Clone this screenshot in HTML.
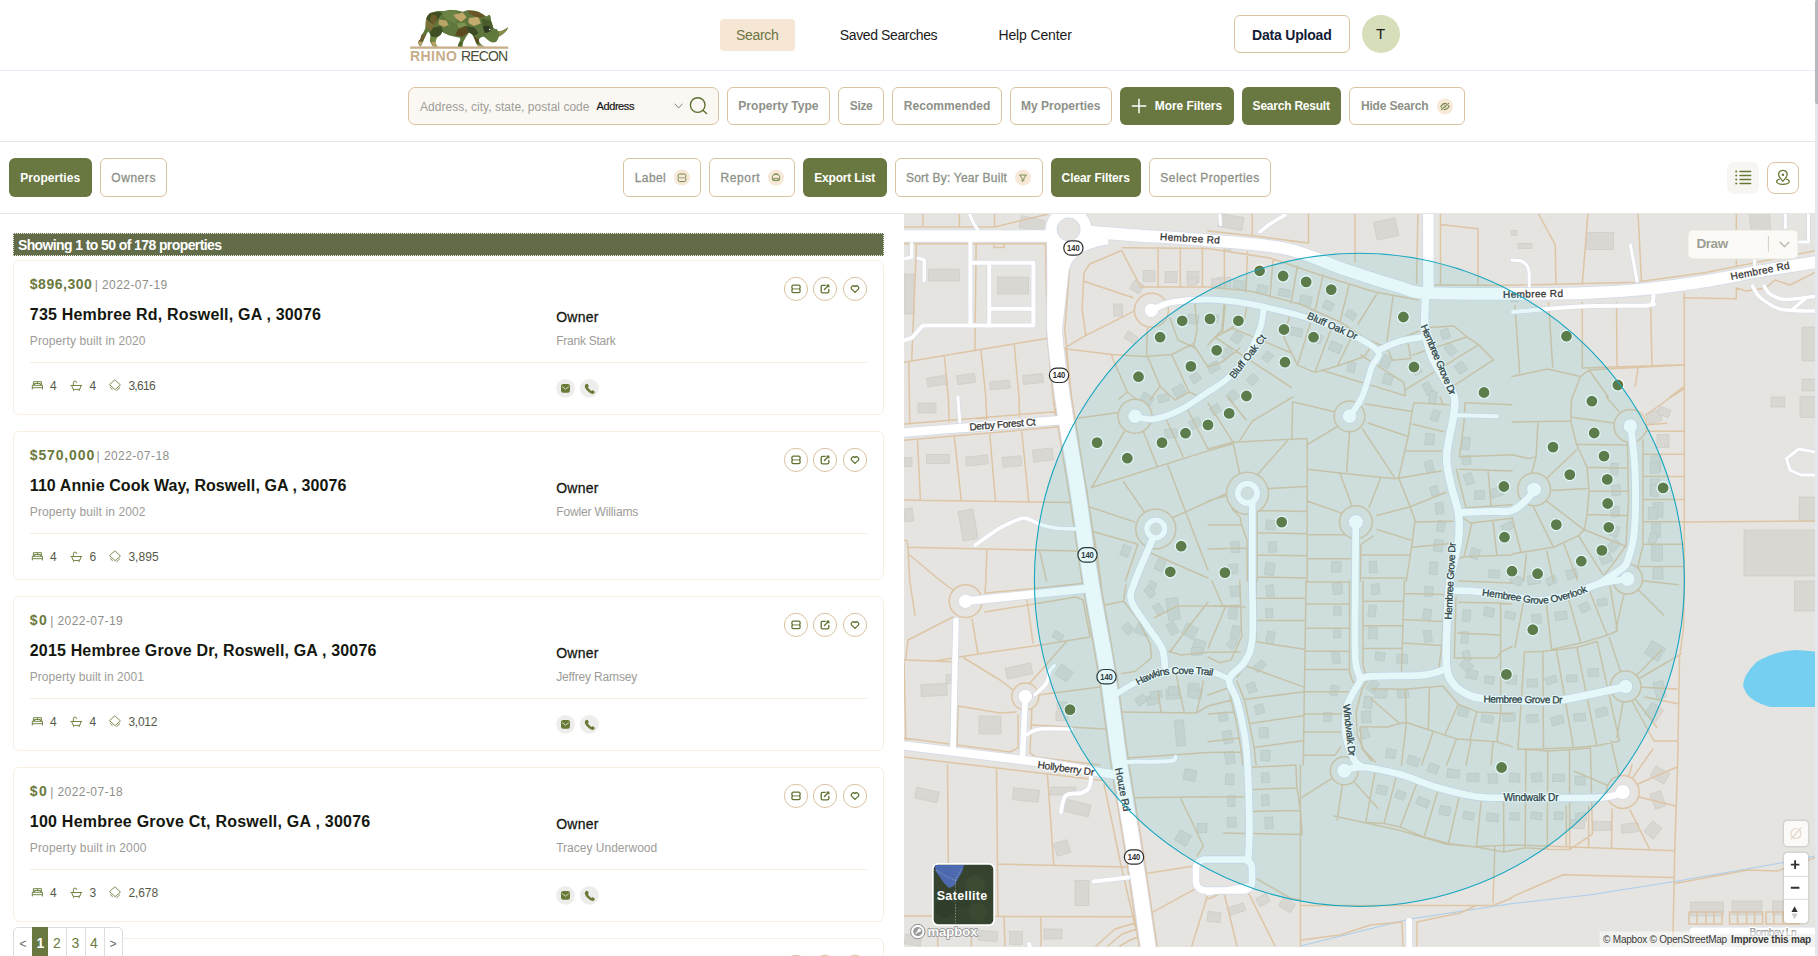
<!DOCTYPE html>
<html><head><meta charset="utf-8"><title>Rhino Recon</title>
<style>
html,body{margin:0;padding:0;background:#fff;}
body{width:1818px;height:956px;overflow:hidden;position:relative;font-family:"Liberation Sans",sans-serif;}
.abs{position:absolute;}
.t{position:absolute;white-space:pre;line-height:1;font-family:"Liberation Sans",sans-serif;}
svg{position:absolute;overflow:visible;}
</style></head>
<body>
<div class="abs" style="left:0;top:70px;width:1815px;height:1px;background:#ececf8"></div>
<svg style="left:400px;top:0px" width="120" height="75" viewBox="0 0 1530 956"><defs><clipPath id="rh"><path d="M400,160 L480,140 L560,140 L640,125 L720,130 L800,150 L860,130 L940,135 L1000,150 L1060,180 L1100,210 L1125,195 L1142,188 L1156,215 L1160,260 L1175,300 L1188,352 L1212,372 L1232,368 L1240,385 L1262,402 L1310,390 L1350,365 L1380,343 L1366,382 L1330,422 L1290,452 L1262,466 L1246,500 L1226,536 L1180,542 L1140,526 L1100,492 L1070,470 L1040,472 L1005,500 L1012,540 L1042,575 L1078,592 L1060,600 L1000,597 L975,560 L950,500 L920,440 L880,415 L835,480 L805,540 L792,575 L803,597 L735,597 L746,560 L770,500 L762,480 L700,470 L620,450 L560,420 L540,400 L520,440 L470,480 L452,530 L462,570 L484,592 L420,592 L400,560 L380,520 L390,470 L380,430 L362,400 L340,430 L310,490 L290,540 L272,580 L256,597 L236,562 L230,530 L260,500 L272,450 L300,410 L322,360 L326,300 L332,240 L352,200 L380,170 Z"/></clipPath></defs><g clip-path="url(#rh)"><path d="M300,100 H1400 V620 H200 V100Z" fill="#5f773c"/><path d="M330,180 L470,150 L540,170 L470,260 L400,300 L340,240Z" fill="#3f4d22"/><path d="M400,180 L470,200 L470,260 L420,330 L380,250Z" fill="#6b5c2c"/><path d="M326,240 L400,300 L440,330 L400,400 L330,330Z" fill="#7d7039"/><path d="M420,350 L520,330 L560,420 L500,470 L400,470 L380,420Z" fill="#3e4f24"/><path d="M500,250 L590,260 L620,320 L560,345 L490,310Z" fill="#b9a566"/><path d="M560,140 L700,130 L760,200 L700,300 L600,250 L540,180Z" fill="#6b8445"/><path d="M680,190 L800,160 L850,220 L780,280 L720,240Z" fill="#bfa86a"/><path d="M880,230 L1000,215 L1030,300 L940,330 L870,290Z" fill="#c2ac6f"/><path d="M860,130 L1000,150 L1090,210 L1020,230 L930,200 L880,170Z" fill="#6a5526"/><path d="M720,300 L830,290 L860,340 L760,370Z" fill="#7c9350"/><path d="M740,370 L830,330 L880,415 L790,470 L700,450Z" fill="#5c4a20"/><path d="M830,330 L950,350 L1000,420 L950,460 L880,415Z" fill="#3c4a26"/><path d="M1040,240 L1160,260 L1190,360 L1120,420 L1060,380Z" fill="#4a5c2a"/><path d="M1060,330 L1140,330 L1150,400 L1080,420Z" fill="#2f3a22"/><path d="M1120,420 L1262,402 L1246,500 L1180,542 L1100,492Z" fill="#5f7a3a"/><path d="M1262,402 L1380,343 L1330,422 L1262,466Z" fill="#8a8a4a"/><path d="M260,450 L340,430 L310,520 L240,560 L225,520Z" fill="#6d5f2e"/><path d="M225,520 L290,540 L256,600 L230,570Z" fill="#b5a468"/><path d="M380,470 L470,480 L452,540 L400,540Z" fill="#71893f"/><path d="M400,540 L452,530 L484,594 L420,594Z" fill="#b3a062"/><path d="M940,460 L1005,500 L1012,540 L975,560Z" fill="#5a4a20"/><path d="M1000,570 L1078,590 L1060,602 L1000,600Z" fill="#c1ad74"/><path d="M746,540 L805,540 L803,600 L735,600Z" fill="#4d6128"/></g><circle cx="1143" cy="376" r="9" fill="#fff"/><rect x="130" y="592" width="1250" height="30" fill="#c9b08d"/></svg>
<span class="t" style="left:410.00px;top:49.00px;font-size:14px;font-weight:700;color:#c7ae8a;letter-spacing:0.444px;">RHINO</span>
<span class="t" style="left:461.00px;top:49.00px;font-size:14px;font-weight:400;color:#4a4f36;letter-spacing:-0.841px;">RECON</span>
<div class="abs" style="left:720px;top:19px;width:75px;height:32px;background:#f6e7d5;border-radius:4px"></div>
<span class="t" style="left:735.90px;top:28.00px;font-size:14px;font-weight:400;color:#6c7344;letter-spacing:-0.292px;">Search</span>
<span class="t" style="left:839.80px;top:28.00px;font-size:14px;font-weight:400;color:#1b1b1b;letter-spacing:-0.380px;">Saved Searches</span>
<span class="t" style="left:998.50px;top:28.00px;font-size:14px;font-weight:400;color:#1b1b1b;letter-spacing:-0.140px;">Help Center</span>
<div class="abs" style="left:1234px;top:15px;width:116px;height:38px;border:1px solid #dbc2a1;border-radius:6px;box-sizing:border-box"></div>
<span class="t" style="left:1252.10px;top:28.00px;font-size:14px;font-weight:700;color:#141c36;letter-spacing:-0.209px;">Data Upload</span>
<div class="abs" style="left:1362px;top:15px;width:38px;height:38px;border-radius:50%;background:#d6dfba"></div>
<span class="t" style="left:1375.90px;top:26.00px;font-size:15px;font-weight:400;color:#1b1b1b;letter-spacing:0.000px;">T</span>
<div class="abs" style="left:0;top:141px;width:1815px;height:1px;background:#e6e6e2"></div>
<div class="abs" style="left:408px;top:87px;width:311px;height:38px;border:1px solid #dbc2a1;border-radius:7px;box-sizing:border-box;background:#fbf8f3"></div>
<span class="t" style="left:420.10px;top:101.00px;font-size:12px;font-weight:400;color:#9d9d98;letter-spacing:0.027px;">Address, city, state, postal code</span>
<span class="t" style="left:596.60px;top:101.00px;font-size:11px;font-weight:400;color:#151515;letter-spacing:-0.427px;-webkit-text-stroke:0.2px #151515;">Address</span>
<svg style="left:673.5px;top:103.3px" width="9.2" height="6" viewBox="0 0 9.2 6"><path d="M1,1 L4.6,5 L8.2,1" fill="none" stroke="#85857f" stroke-width="1" stroke-linecap="round" stroke-linejoin="round"/></svg>
<svg style="left:686px;top:94px" width="24" height="24" viewBox="0 0 24 24"><circle cx="11.7" cy="11" r="7.3" fill="none" stroke="#5b6f2c" stroke-width="1.35"/><path d="M17.2,16.4 L20.6,19.5" stroke="#5b6f2c" stroke-width="1.35" stroke-linecap="round"/></svg>
<div class="abs" style="left:727px;top:87px;width:103px;height:38px;border:1px solid #dbc2a1;border-radius:6px;box-sizing:border-box;background:#fff"></div>
<span class="t" style="left:738.30px;top:100.00px;font-size:12px;font-weight:700;color:#8e9188;letter-spacing:0.032px;">Property Type</span>
<div class="abs" style="left:838px;top:87px;width:46px;height:38px;border:1px solid #dbc2a1;border-radius:6px;box-sizing:border-box;background:#fff"></div>
<span class="t" style="left:849.80px;top:100.00px;font-size:12px;font-weight:700;color:#8e9188;letter-spacing:-0.372px;">Size</span>
<div class="abs" style="left:892px;top:87px;width:110px;height:38px;border:1px solid #dbc2a1;border-radius:6px;box-sizing:border-box;background:#fff"></div>
<span class="t" style="left:903.80px;top:100.00px;font-size:12px;font-weight:700;color:#8e9188;letter-spacing:0.057px;">Recommended</span>
<div class="abs" style="left:1010px;top:87px;width:102px;height:38px;border:1px solid #dbc2a1;border-radius:6px;box-sizing:border-box;background:#fff"></div>
<span class="t" style="left:1021.00px;top:100.00px;font-size:12px;font-weight:700;color:#8e9188;letter-spacing:0.003px;">My Properties</span>
<div class="abs" style="left:1120px;top:87px;width:114px;height:38px;border-radius:6px;background:#697840"></div>
<svg style="left:1131.1px;top:97.7px" width="16" height="16" viewBox="0 0 16 16"><path d="M8,1.3 V14.7 M1.3,8 H14.7" stroke="#fff" stroke-width="1.5" stroke-linecap="round"/></svg>
<span class="t" style="left:1154.80px;top:100.00px;font-size:12px;font-weight:700;color:#fff;letter-spacing:-0.065px;">More Filters</span>
<div class="abs" style="left:1242px;top:87px;width:99px;height:38px;border-radius:6px;background:#697840"></div>
<span class="t" style="left:1252.60px;top:100.00px;font-size:12px;font-weight:700;color:#fff;letter-spacing:-0.221px;">Search Result</span>
<div class="abs" style="left:1349px;top:87px;width:116px;height:38px;border:1px solid #dbc2a1;border-radius:6px;box-sizing:border-box;background:#fff"></div>
<span class="t" style="left:1360.90px;top:100.00px;font-size:12px;font-weight:700;color:#8e9188;letter-spacing:-0.158px;">Hide Search</span>
<svg style="left:0;top:0" width="1818" height="956"><circle cx="1445" cy="106.5" r="8" fill="#f7e8d7"/><path d="M1440.8,106.5 q4.2,-6.2 8.4,0 q-4.2,6.2 -8.4,0Z" fill="none" stroke="#6f8447" stroke-width="1.1"/><circle cx="1445" cy="106.5" r="1.3" fill="none" stroke="#6f8447" stroke-width="0.9"/><path d="M1441.4,109.6 L1448.6,103.4" stroke="#f7e8d7" stroke-width="2.4"/><path d="M1441.4,109.6 L1448.6,103.4" stroke="#6f8447" stroke-width="1.05" stroke-linecap="round"/></svg>
<div class="abs" style="left:0;top:213px;width:1815px;height:1px;background:#e6e6e2"></div>
<div class="abs" style="left:9px;top:158px;width:83px;height:39px;border-radius:6px;background:#697840"></div>
<span class="t" style="left:20.20px;top:172.00px;font-size:12px;font-weight:700;color:#fff;letter-spacing:0.071px;">Properties</span>
<div class="abs" style="left:100px;top:158px;width:67px;height:39px;border:1px solid #dbc2a1;border-radius:6px;box-sizing:border-box;background:#fff"></div>
<span class="t" style="left:111.30px;top:172.00px;font-size:12px;font-weight:400;color:#8e9188;letter-spacing:0.551px;-webkit-text-stroke:0.3px #8e9188;">Owners</span>
<div class="abs" style="left:623px;top:158px;width:78px;height:39px;border:1px solid #dbc2a1;border-radius:6px;box-sizing:border-box;background:#fff"></div>
<span class="t" style="left:634.80px;top:172.00px;font-size:12px;font-weight:400;color:#8e9188;letter-spacing:0.381px;-webkit-text-stroke:0.3px #8e9188;">Label</span>
<svg style="left:0;top:0" width="1818" height="956"><circle cx="682" cy="177.6" r="8" fill="#f7e8d7"/><path d="M679.6,173.99999999999997 H684.4 Q685.8,173.99999999999997 685.8,175.39999999999998 V176.89999999999998 Q684.63,177.79999999999998 685.8,178.7 V180.2 Q685.8,181.6 684.4,181.6 H679.6 Q678.2,181.6 678.2,180.2 V178.7 Q679.37,177.79999999999998 678.2,176.89999999999998 V175.39999999999998 Q678.2,173.99999999999997 679.6,173.99999999999997Z" fill="none" stroke="#6f8447" stroke-width="0.95" stroke-linejoin="round"/><path d="M679.4000000000001,177.79999999999998 H684.5999999999999" stroke="#6f8447" stroke-width="0.8075" opacity="0.8"/></svg>
<div class="abs" style="left:709px;top:158px;width:86px;height:39px;border:1px solid #dbc2a1;border-radius:6px;box-sizing:border-box;background:#fff"></div>
<span class="t" style="left:720.50px;top:172.00px;font-size:12px;font-weight:400;color:#8e9188;letter-spacing:0.614px;-webkit-text-stroke:0.3px #8e9188;">Report</span>
<svg style="left:0;top:0" width="1818" height="956"><circle cx="776" cy="177.6" r="8" fill="#f7e8d7"/><path d="M772.4,176.79999999999998 q0,-2.6 3.6,-2.6 q3.6,0 3.6,2.6 v2.2 q0,1.6 -1.6,1.6 h-4 q-1.6,0 -1.6,-1.6Z" fill="none" stroke="#6f8447" stroke-width="0.95"/><path d="M773.8,180.6 v-2 h4.4 v2" fill="none" stroke="#6f8447" stroke-width="0.95"/><path d="M774,174.0 h4" stroke="#6f8447" stroke-width="0.9"/></svg>
<div class="abs" style="left:803px;top:158px;width:84px;height:39px;border-radius:6px;background:#697840"></div>
<span class="t" style="left:814.20px;top:172.00px;font-size:12px;font-weight:700;color:#fff;letter-spacing:-0.167px;">Export List</span>
<div class="abs" style="left:895px;top:158px;width:148px;height:39px;border:1px solid #dbc2a1;border-radius:6px;box-sizing:border-box;background:#fff"></div>
<span class="t" style="left:905.90px;top:172.00px;font-size:12px;font-weight:400;color:#8e9188;letter-spacing:0.237px;-webkit-text-stroke:0.3px #8e9188;">Sort By: Year Built</span>
<svg style="left:0;top:0" width="1818" height="956"><circle cx="1023" cy="177.6" r="8" fill="#f7e8d7"/><path d="M1019.6,175.0 h6.8 l-2.5,3.2 v2.3 l-1.8,0.9 v-3.2Z" fill="none" stroke="#6f8447" stroke-width="0.95" stroke-linejoin="round"/></svg>
<div class="abs" style="left:1051px;top:158px;width:90px;height:39px;border-radius:6px;background:#697840"></div>
<span class="t" style="left:1061.60px;top:172.00px;font-size:12px;font-weight:700;color:#fff;letter-spacing:-0.090px;">Clear Filters</span>
<div class="abs" style="left:1149px;top:158px;width:122px;height:39px;border:1px solid #dbc2a1;border-radius:6px;box-sizing:border-box;background:#fff"></div>
<span class="t" style="left:1160.30px;top:172.00px;font-size:12px;font-weight:400;color:#8e9188;letter-spacing:0.469px;-webkit-text-stroke:0.3px #8e9188;">Select Properties</span>
<div class="abs" style="left:1727px;top:162px;width:32px;height:32px;border-radius:7px;background:#f7f6f2"></div>
<svg style="left:0;top:0" width="1818" height="956"><path d="M1740,171.4 H1750.6" stroke="#647a35" stroke-width="1.5" stroke-linecap="round"/><circle cx="1736.2" cy="171.4" r="1" fill="#647a35"/><path d="M1740,175.4 H1750.6" stroke="#647a35" stroke-width="1.5" stroke-linecap="round"/><circle cx="1736.2" cy="175.4" r="1" fill="#647a35"/><path d="M1740,179.4 H1750.6" stroke="#647a35" stroke-width="1.5" stroke-linecap="round"/><circle cx="1736.2" cy="179.4" r="1" fill="#647a35"/><path d="M1740,183.4 H1750.6" stroke="#647a35" stroke-width="1.5" stroke-linecap="round"/><circle cx="1736.2" cy="183.4" r="1" fill="#647a35"/></svg>
<div class="abs" style="left:1767px;top:162px;width:32px;height:32px;border:1px solid #dbc2a1;border-radius:8px;box-sizing:border-box"></div>
<svg style="left:0;top:0" width="1818" height="956"><path d="M1782.9,181.2 C1780.7,178.6 1778.6000000000001,177 1778.6000000000001,174.6 A4.3,4.3 0 1 1 1787.2,174.6 C1787.2,177 1785.1000000000001,178.6 1782.9,181.2Z" fill="none" stroke="#647a35" stroke-width="1.3" stroke-linejoin="round"/><circle cx="1782.9" cy="174.8" r="1.3" fill="#647a35"/><path d="M1779.3000000000002,179.2 C1774.7,180.6 1775.9,184.3 1782.9,184.3 C1789.9,184.3 1791.1000000000001,180.6 1786.5,179.2" fill="none" stroke="#647a35" stroke-width="1.3" stroke-linecap="round"/></svg>
<div class="abs" style="left:13px;top:233px;width:871px;height:23px;background:#636c49;border:1px dotted #e9ece0;box-sizing:border-box"></div>
<span class="t" style="left:17.90px;top:238.00px;font-size:14px;font-weight:700;color:#fff;letter-spacing:-0.599px;">Showing 1 to 50 of 178 properties</span>
<div class="abs" style="left:13px;top:260px;width:871px;height:155px;border:1px solid #f9eee4;border-radius:6px;box-sizing:border-box;background:#fff"></div>
<svg style="left:0;top:0" width="1818" height="956"><circle cx="796" cy="288.9" r="11.6" fill="#fff" stroke="#dbc2a1" stroke-width="1"/><path d="M793.3,285.2 H798.7 Q800.1,285.2 800.1,286.59999999999997 V288.0 Q798.9300000000001,288.9 800.1,289.79999999999995 V291.2 Q800.1,292.59999999999997 798.7,292.59999999999997 H793.3 Q791.9,292.59999999999997 791.9,291.2 V289.79999999999995 Q793.0699999999999,288.9 791.9,288.0 V286.59999999999997 Q791.9,285.2 793.3,285.2Z" fill="none" stroke="#5f7330" stroke-width="1.3" stroke-linejoin="round"/><path d="M793.1,288.9 H798.9" stroke="#5f7330" stroke-width="1.105" opacity="0.8"/></svg>
<svg style="left:0;top:0" width="1818" height="956"><circle cx="825" cy="288.9" r="11.6" fill="#fff" stroke="#dbc2a1" stroke-width="1"/><path d="M825.2,285.29999999999995 H822.6 Q821.2,285.29999999999995 821.2,286.7 V291.5 Q821.2,292.9 822.6,292.9 H827.4 Q828.8,292.9 828.8,291.5 V289.5" fill="none" stroke="#5f7330" stroke-width="1.35" stroke-linecap="round"/><path d="M824.4,289.5 L828.4,285.5" stroke="#5f7330" stroke-width="1.35" stroke-linecap="round"/><path d="M826.6,284.9 H829 V287.29999999999995Z" fill="#5f7330" stroke="#5f7330" stroke-width="0.8" stroke-linejoin="round"/></svg>
<svg style="left:0;top:0" width="1818" height="956"><circle cx="855" cy="288.9" r="11.6" fill="#fff" stroke="#dbc2a1" stroke-width="1"/><path d="M855,292.4 L851.4,288.9 A2.2,2.2 0 0 1 855,286.5 A2.2,2.2 0 0 1 858.6,288.9 Z" fill="none" stroke="#5f7330" stroke-width="1.3" stroke-linejoin="round"/></svg>
<span class="t" style="left:29.80px;top:277.00px;font-size:14px;font-weight:700;color:#6b7a3e;letter-spacing:0.513px;">$896,300</span>
<span class="t" style="left:94.70px;top:279.00px;font-size:12px;font-weight:400;color:#8f8f8a;letter-spacing:0.432px;">| 2022-07-19</span>
<span class="t" style="left:29.80px;top:307.00px;font-size:16px;font-weight:700;color:#14170e;letter-spacing:0.183px;">735 Hembree Rd, Roswell, GA , 30076</span>
<span class="t" style="left:29.80px;top:335.00px;font-size:12px;font-weight:400;color:#9c9c97;letter-spacing:0.104px;">Property built in 2020</span>
<div class="abs" style="left:30px;top:362px;width:837px;height:1px;background:#f8ece1"></div>
<svg style="left:0;top:0" width="1818" height="956"><path d="M32.3,389.4 V385.3 H42.5 V389.4 M32.3,387.7 H42.5 M33.4,385.3 V381.7 H41.4 V385.3 M37.4,381.7 V383.3 M34.4,385.09999999999997 V383.5 H40.4 V385.09999999999997" fill="none" stroke="#6d7f3d" stroke-width="0.95" stroke-linejoin="round"/></svg>
<span class="t" style="left:50.10px;top:380.00px;font-size:12px;font-weight:400;color:#55594a;letter-spacing:0.000px;">4</span>
<svg style="left:0;top:0" width="1818" height="956"><path d="M71,385.5 H81.8 M72.1,385.5 V386.9 Q72.1,389.5 74.7,389.5 H78.1 Q80.7,389.5 80.7,386.9 V385.5 M73.6,389.5 V390.7 M79.2,389.5 V390.7 M73.4,385.5 V382.7 Q73.4,381.09999999999997 75,381.09999999999997 Q76.5,381.09999999999997 76.5,382.5" fill="none" stroke="#6d7f3d" stroke-width="0.95" stroke-linecap="round"/></svg>
<span class="t" style="left:89.50px;top:380.00px;font-size:12px;font-weight:400;color:#55594a;letter-spacing:0.000px;">4</span>
<svg style="left:0;top:0" width="1818" height="956"><path d="M115.1,380.09999999999997 L120.4,384.9 L115.1,389.7 L109.8,384.9Z M110.4,387.7 L112.3,389.5 M119.8,387.7 L116.7,390.59999999999997" fill="none" stroke="#6d7f3d" stroke-width="0.9" stroke-linejoin="round" stroke-linecap="round"/></svg>
<span class="t" style="left:128.40px;top:380.00px;font-size:12px;font-weight:400;color:#55594a;letter-spacing:-0.708px;">3,616</span>
<span class="t" style="left:556.20px;top:310.00px;font-size:14px;font-weight:400;color:#14170e;letter-spacing:0.266px;-webkit-text-stroke:0.28px #14170e;">Owner</span>
<span class="t" style="left:556.20px;top:335.00px;font-size:12px;font-weight:400;color:#9c9c97;letter-spacing:-0.242px;">Frank Stark</span>
<svg style="left:0;top:0" width="1818" height="956"><circle cx="565.5" cy="388.3" r="9.4" fill="#ededeb"/><rect x="561.0" y="384.1" width="9" height="8.6" rx="2.2" fill="#6a7b37"/><path d="M562.5,386.90000000000003 L565.5,389.1 L568.5,386.90000000000003" fill="none" stroke="#eef0e4" stroke-width="0.8" stroke-linecap="round" stroke-linejoin="round"/></svg>
<svg style="left:0;top:0" width="1818" height="956"><circle cx="589.4" cy="388.3" r="9.4" fill="#ededeb"/><path d="M585.3,384.7 q1.2,-1.6 2.4,-0.6 l1,1.6 q0.3,0.8 -0.8,1.6 q1.2,2.4 3.4,3.6 q0.9,-1 1.7,-0.6 l1.6,1.1 q0.7,0.9 -0.6,2 q-1.6,1.2 -4.4,-0.6 q-3.2,-2.2 -4.6,-5.4 q-0.6,-1.6 0.3,-2.7Z" fill="#6a7b37"/></svg>
<div class="abs" style="left:13px;top:431px;width:871px;height:149px;border:1px solid #f9eee4;border-radius:6px;box-sizing:border-box;background:#fff"></div>
<svg style="left:0;top:0" width="1818" height="956"><circle cx="796" cy="459.9" r="11.6" fill="#fff" stroke="#dbc2a1" stroke-width="1"/><path d="M793.3,456.2 H798.7 Q800.1,456.2 800.1,457.59999999999997 V459.0 Q798.9300000000001,459.9 800.1,460.79999999999995 V462.2 Q800.1,463.59999999999997 798.7,463.59999999999997 H793.3 Q791.9,463.59999999999997 791.9,462.2 V460.79999999999995 Q793.0699999999999,459.9 791.9,459.0 V457.59999999999997 Q791.9,456.2 793.3,456.2Z" fill="none" stroke="#5f7330" stroke-width="1.3" stroke-linejoin="round"/><path d="M793.1,459.9 H798.9" stroke="#5f7330" stroke-width="1.105" opacity="0.8"/></svg>
<svg style="left:0;top:0" width="1818" height="956"><circle cx="825" cy="459.9" r="11.6" fill="#fff" stroke="#dbc2a1" stroke-width="1"/><path d="M825.2,456.29999999999995 H822.6 Q821.2,456.29999999999995 821.2,457.7 V462.5 Q821.2,463.9 822.6,463.9 H827.4 Q828.8,463.9 828.8,462.5 V460.5" fill="none" stroke="#5f7330" stroke-width="1.35" stroke-linecap="round"/><path d="M824.4,460.5 L828.4,456.5" stroke="#5f7330" stroke-width="1.35" stroke-linecap="round"/><path d="M826.6,455.9 H829 V458.29999999999995Z" fill="#5f7330" stroke="#5f7330" stroke-width="0.8" stroke-linejoin="round"/></svg>
<svg style="left:0;top:0" width="1818" height="956"><circle cx="855" cy="459.9" r="11.6" fill="#fff" stroke="#dbc2a1" stroke-width="1"/><path d="M855,463.4 L851.4,459.9 A2.2,2.2 0 0 1 855,457.5 A2.2,2.2 0 0 1 858.6,459.9 Z" fill="none" stroke="#5f7330" stroke-width="1.3" stroke-linejoin="round"/></svg>
<span class="t" style="left:29.80px;top:448.00px;font-size:14px;font-weight:700;color:#6b7a3e;letter-spacing:0.856px;">$570,000</span>
<span class="t" style="left:96.60px;top:450.00px;font-size:12px;font-weight:400;color:#8f8f8a;letter-spacing:0.432px;">| 2022-07-18</span>
<span class="t" style="left:29.80px;top:478.00px;font-size:16px;font-weight:700;color:#14170e;letter-spacing:0.079px;">110 Annie Cook Way, Roswell, GA , 30076</span>
<span class="t" style="left:29.80px;top:506.00px;font-size:12px;font-weight:400;color:#9c9c97;letter-spacing:0.104px;">Property built in 2002</span>
<div class="abs" style="left:30px;top:533px;width:837px;height:1px;background:#f8ece1"></div>
<svg style="left:0;top:0" width="1818" height="956"><path d="M32.3,560.4000000000001 V556.3000000000001 H42.5 V560.4000000000001 M32.3,558.7 H42.5 M33.4,556.3000000000001 V552.7 H41.4 V556.3000000000001 M37.4,552.7 V554.3000000000001 M34.4,556.1 V554.5 H40.4 V556.1" fill="none" stroke="#6d7f3d" stroke-width="0.95" stroke-linejoin="round"/></svg>
<span class="t" style="left:50.10px;top:551.00px;font-size:12px;font-weight:400;color:#55594a;letter-spacing:0.000px;">4</span>
<svg style="left:0;top:0" width="1818" height="956"><path d="M71,556.5 H81.8 M72.1,556.5 V557.9000000000001 Q72.1,560.5 74.7,560.5 H78.1 Q80.7,560.5 80.7,557.9000000000001 V556.5 M73.6,560.5 V561.7 M79.2,560.5 V561.7 M73.4,556.5 V553.7 Q73.4,552.1 75,552.1 Q76.5,552.1 76.5,553.5" fill="none" stroke="#6d7f3d" stroke-width="0.95" stroke-linecap="round"/></svg>
<span class="t" style="left:89.50px;top:551.00px;font-size:12px;font-weight:400;color:#55594a;letter-spacing:0.000px;">6</span>
<svg style="left:0;top:0" width="1818" height="956"><path d="M115.1,551.1 L120.4,555.9000000000001 L115.1,560.7 L109.8,555.9000000000001Z M110.4,558.7 L112.3,560.5 M119.8,558.7 L116.7,561.6" fill="none" stroke="#6d7f3d" stroke-width="0.9" stroke-linejoin="round" stroke-linecap="round"/></svg>
<span class="t" style="left:128.40px;top:551.00px;font-size:12px;font-weight:400;color:#55594a;letter-spacing:0.042px;">3,895</span>
<span class="t" style="left:556.20px;top:481.00px;font-size:14px;font-weight:400;color:#14170e;letter-spacing:0.266px;-webkit-text-stroke:0.28px #14170e;">Owner</span>
<span class="t" style="left:556.20px;top:506.00px;font-size:12px;font-weight:400;color:#9c9c97;letter-spacing:-0.136px;">Fowler Williams</span>
<div class="abs" style="left:13px;top:596px;width:871px;height:155px;border:1px solid #f9eee4;border-radius:6px;box-sizing:border-box;background:#fff"></div>
<svg style="left:0;top:0" width="1818" height="956"><circle cx="796" cy="624.9" r="11.6" fill="#fff" stroke="#dbc2a1" stroke-width="1"/><path d="M793.3,621.1999999999999 H798.7 Q800.1,621.1999999999999 800.1,622.5999999999999 V624.0 Q798.9300000000001,624.9 800.1,625.8 V627.2 Q800.1,628.6 798.7,628.6 H793.3 Q791.9,628.6 791.9,627.2 V625.8 Q793.0699999999999,624.9 791.9,624.0 V622.5999999999999 Q791.9,621.1999999999999 793.3,621.1999999999999Z" fill="none" stroke="#5f7330" stroke-width="1.3" stroke-linejoin="round"/><path d="M793.1,624.9 H798.9" stroke="#5f7330" stroke-width="1.105" opacity="0.8"/></svg>
<svg style="left:0;top:0" width="1818" height="956"><circle cx="825" cy="624.9" r="11.6" fill="#fff" stroke="#dbc2a1" stroke-width="1"/><path d="M825.2,621.3 H822.6 Q821.2,621.3 821.2,622.6999999999999 V627.5 Q821.2,628.9 822.6,628.9 H827.4 Q828.8,628.9 828.8,627.5 V625.5" fill="none" stroke="#5f7330" stroke-width="1.35" stroke-linecap="round"/><path d="M824.4,625.5 L828.4,621.5" stroke="#5f7330" stroke-width="1.35" stroke-linecap="round"/><path d="M826.6,620.9 H829 V623.3Z" fill="#5f7330" stroke="#5f7330" stroke-width="0.8" stroke-linejoin="round"/></svg>
<svg style="left:0;top:0" width="1818" height="956"><circle cx="855" cy="624.9" r="11.6" fill="#fff" stroke="#dbc2a1" stroke-width="1"/><path d="M855,628.4 L851.4,624.9 A2.2,2.2 0 0 1 855,622.5 A2.2,2.2 0 0 1 858.6,624.9 Z" fill="none" stroke="#5f7330" stroke-width="1.3" stroke-linejoin="round"/></svg>
<span class="t" style="left:29.80px;top:613.00px;font-size:14px;font-weight:700;color:#6b7a3e;letter-spacing:1.422px;">$0</span>
<span class="t" style="left:50.20px;top:615.00px;font-size:12px;font-weight:400;color:#8f8f8a;letter-spacing:0.432px;">| 2022-07-19</span>
<span class="t" style="left:29.80px;top:643.00px;font-size:16px;font-weight:700;color:#14170e;letter-spacing:0.160px;">2015 Hembree Grove Dr, Roswell, GA , 30076</span>
<span class="t" style="left:29.80px;top:671.00px;font-size:12px;font-weight:400;color:#9c9c97;letter-spacing:0.033px;">Property built in 2001</span>
<div class="abs" style="left:30px;top:698px;width:837px;height:1px;background:#f8ece1"></div>
<svg style="left:0;top:0" width="1818" height="956"><path d="M32.3,725.4000000000001 V721.3000000000001 H42.5 V725.4000000000001 M32.3,723.7 H42.5 M33.4,721.3000000000001 V717.7 H41.4 V721.3000000000001 M37.4,717.7 V719.3000000000001 M34.4,721.1 V719.5 H40.4 V721.1" fill="none" stroke="#6d7f3d" stroke-width="0.95" stroke-linejoin="round"/></svg>
<span class="t" style="left:50.10px;top:716.00px;font-size:12px;font-weight:400;color:#55594a;letter-spacing:0.000px;">4</span>
<svg style="left:0;top:0" width="1818" height="956"><path d="M71,721.5 H81.8 M72.1,721.5 V722.9000000000001 Q72.1,725.5 74.7,725.5 H78.1 Q80.7,725.5 80.7,722.9000000000001 V721.5 M73.6,725.5 V726.7 M79.2,725.5 V726.7 M73.4,721.5 V718.7 Q73.4,717.1 75,717.1 Q76.5,717.1 76.5,718.5" fill="none" stroke="#6d7f3d" stroke-width="0.95" stroke-linecap="round"/></svg>
<span class="t" style="left:89.50px;top:716.00px;font-size:12px;font-weight:400;color:#55594a;letter-spacing:0.000px;">4</span>
<svg style="left:0;top:0" width="1818" height="956"><path d="M115.1,716.1 L120.4,720.9000000000001 L115.1,725.7 L109.8,720.9000000000001Z M110.4,723.7 L112.3,725.5 M119.8,723.7 L116.7,726.6" fill="none" stroke="#6d7f3d" stroke-width="0.9" stroke-linejoin="round" stroke-linecap="round"/></svg>
<span class="t" style="left:128.40px;top:716.00px;font-size:12px;font-weight:400;color:#55594a;letter-spacing:-0.233px;">3,012</span>
<span class="t" style="left:556.20px;top:646.00px;font-size:14px;font-weight:400;color:#14170e;letter-spacing:0.266px;-webkit-text-stroke:0.28px #14170e;">Owner</span>
<span class="t" style="left:556.20px;top:671.00px;font-size:12px;font-weight:400;color:#9c9c97;letter-spacing:-0.157px;">Jeffrey Ramsey</span>
<svg style="left:0;top:0" width="1818" height="956"><circle cx="565.5" cy="724.3" r="9.4" fill="#ededeb"/><rect x="561.0" y="720.0999999999999" width="9" height="8.6" rx="2.2" fill="#6a7b37"/><path d="M562.5,722.9 L565.5,725.0999999999999 L568.5,722.9" fill="none" stroke="#eef0e4" stroke-width="0.8" stroke-linecap="round" stroke-linejoin="round"/></svg>
<svg style="left:0;top:0" width="1818" height="956"><circle cx="589.4" cy="724.3" r="9.4" fill="#ededeb"/><path d="M585.3,720.6999999999999 q1.2,-1.6 2.4,-0.6 l1,1.6 q0.3,0.8 -0.8,1.6 q1.2,2.4 3.4,3.6 q0.9,-1 1.7,-0.6 l1.6,1.1 q0.7,0.9 -0.6,2 q-1.6,1.2 -4.4,-0.6 q-3.2,-2.2 -4.6,-5.4 q-0.6,-1.6 0.3,-2.7Z" fill="#6a7b37"/></svg>
<div class="abs" style="left:13px;top:767px;width:871px;height:155px;border:1px solid #f9eee4;border-radius:6px;box-sizing:border-box;background:#fff"></div>
<svg style="left:0;top:0" width="1818" height="956"><circle cx="796" cy="795.9" r="11.6" fill="#fff" stroke="#dbc2a1" stroke-width="1"/><path d="M793.3,792.1999999999999 H798.7 Q800.1,792.1999999999999 800.1,793.5999999999999 V795.0 Q798.9300000000001,795.9 800.1,796.8 V798.2 Q800.1,799.6 798.7,799.6 H793.3 Q791.9,799.6 791.9,798.2 V796.8 Q793.0699999999999,795.9 791.9,795.0 V793.5999999999999 Q791.9,792.1999999999999 793.3,792.1999999999999Z" fill="none" stroke="#5f7330" stroke-width="1.3" stroke-linejoin="round"/><path d="M793.1,795.9 H798.9" stroke="#5f7330" stroke-width="1.105" opacity="0.8"/></svg>
<svg style="left:0;top:0" width="1818" height="956"><circle cx="825" cy="795.9" r="11.6" fill="#fff" stroke="#dbc2a1" stroke-width="1"/><path d="M825.2,792.3 H822.6 Q821.2,792.3 821.2,793.6999999999999 V798.5 Q821.2,799.9 822.6,799.9 H827.4 Q828.8,799.9 828.8,798.5 V796.5" fill="none" stroke="#5f7330" stroke-width="1.35" stroke-linecap="round"/><path d="M824.4,796.5 L828.4,792.5" stroke="#5f7330" stroke-width="1.35" stroke-linecap="round"/><path d="M826.6,791.9 H829 V794.3Z" fill="#5f7330" stroke="#5f7330" stroke-width="0.8" stroke-linejoin="round"/></svg>
<svg style="left:0;top:0" width="1818" height="956"><circle cx="855" cy="795.9" r="11.6" fill="#fff" stroke="#dbc2a1" stroke-width="1"/><path d="M855,799.4 L851.4,795.9 A2.2,2.2 0 0 1 855,793.5 A2.2,2.2 0 0 1 858.6,795.9 Z" fill="none" stroke="#5f7330" stroke-width="1.3" stroke-linejoin="round"/></svg>
<span class="t" style="left:29.80px;top:784.00px;font-size:14px;font-weight:700;color:#6b7a3e;letter-spacing:1.422px;">$0</span>
<span class="t" style="left:50.20px;top:786.00px;font-size:12px;font-weight:400;color:#8f8f8a;letter-spacing:0.432px;">| 2022-07-18</span>
<span class="t" style="left:29.80px;top:814.00px;font-size:16px;font-weight:700;color:#14170e;letter-spacing:0.232px;">100 Hembree Grove Ct, Roswell, GA , 30076</span>
<span class="t" style="left:29.80px;top:842.00px;font-size:12px;font-weight:400;color:#9c9c97;letter-spacing:0.152px;">Property built in 2000</span>
<div class="abs" style="left:30px;top:869px;width:837px;height:1px;background:#f8ece1"></div>
<svg style="left:0;top:0" width="1818" height="956"><path d="M32.3,896.4000000000001 V892.3000000000001 H42.5 V896.4000000000001 M32.3,894.7 H42.5 M33.4,892.3000000000001 V888.7 H41.4 V892.3000000000001 M37.4,888.7 V890.3000000000001 M34.4,892.1 V890.5 H40.4 V892.1" fill="none" stroke="#6d7f3d" stroke-width="0.95" stroke-linejoin="round"/></svg>
<span class="t" style="left:50.10px;top:887.00px;font-size:12px;font-weight:400;color:#55594a;letter-spacing:0.000px;">4</span>
<svg style="left:0;top:0" width="1818" height="956"><path d="M71,892.5 H81.8 M72.1,892.5 V893.9000000000001 Q72.1,896.5 74.7,896.5 H78.1 Q80.7,896.5 80.7,893.9000000000001 V892.5 M73.6,896.5 V897.7 M79.2,896.5 V897.7 M73.4,892.5 V889.7 Q73.4,888.1 75,888.1 Q76.5,888.1 76.5,889.5" fill="none" stroke="#6d7f3d" stroke-width="0.95" stroke-linecap="round"/></svg>
<span class="t" style="left:89.50px;top:887.00px;font-size:12px;font-weight:400;color:#55594a;letter-spacing:0.000px;">3</span>
<svg style="left:0;top:0" width="1818" height="956"><path d="M115.1,887.1 L120.4,891.9000000000001 L115.1,896.7 L109.8,891.9000000000001Z M110.4,894.7 L112.3,896.5 M119.8,894.7 L116.7,897.6" fill="none" stroke="#6d7f3d" stroke-width="0.9" stroke-linejoin="round" stroke-linecap="round"/></svg>
<span class="t" style="left:128.40px;top:887.00px;font-size:12px;font-weight:400;color:#55594a;letter-spacing:-0.083px;">2,678</span>
<span class="t" style="left:556.20px;top:817.00px;font-size:14px;font-weight:400;color:#14170e;letter-spacing:0.266px;-webkit-text-stroke:0.28px #14170e;">Owner</span>
<span class="t" style="left:556.20px;top:842.00px;font-size:12px;font-weight:400;color:#9c9c97;letter-spacing:0.004px;">Tracey Underwood</span>
<svg style="left:0;top:0" width="1818" height="956"><circle cx="565.5" cy="895.3" r="9.4" fill="#ededeb"/><rect x="561.0" y="891.0999999999999" width="9" height="8.6" rx="2.2" fill="#6a7b37"/><path d="M562.5,893.9 L565.5,896.0999999999999 L568.5,893.9" fill="none" stroke="#eef0e4" stroke-width="0.8" stroke-linecap="round" stroke-linejoin="round"/></svg>
<svg style="left:0;top:0" width="1818" height="956"><circle cx="589.4" cy="895.3" r="9.4" fill="#ededeb"/><path d="M585.3,891.6999999999999 q1.2,-1.6 2.4,-0.6 l1,1.6 q0.3,0.8 -0.8,1.6 q1.2,2.4 3.4,3.6 q0.9,-1 1.7,-0.6 l1.6,1.1 q0.7,0.9 -0.6,2 q-1.6,1.2 -4.4,-0.6 q-3.2,-2.2 -4.6,-5.4 q-0.6,-1.6 0.3,-2.7Z" fill="#6a7b37"/></svg>
<div class="abs" style="left:13px;top:938px;width:871px;height:60px;border:1px solid #f9eee4;border-radius:6px;box-sizing:border-box;background:#fff"></div>
<svg style="left:0;top:0" width="1818" height="956"><circle cx="796" cy="966.9" r="11.6" fill="#fff" stroke="#dbc2a1" stroke-width="1"/><path d="M793.3,963.1999999999999 H798.7 Q800.1,963.1999999999999 800.1,964.5999999999999 V966.0 Q798.9300000000001,966.9 800.1,967.8 V969.2 Q800.1,970.6 798.7,970.6 H793.3 Q791.9,970.6 791.9,969.2 V967.8 Q793.0699999999999,966.9 791.9,966.0 V964.5999999999999 Q791.9,963.1999999999999 793.3,963.1999999999999Z" fill="none" stroke="#5f7330" stroke-width="1.3" stroke-linejoin="round"/><path d="M793.1,966.9 H798.9" stroke="#5f7330" stroke-width="1.105" opacity="0.8"/></svg>
<svg style="left:0;top:0" width="1818" height="956"><circle cx="825" cy="966.9" r="11.6" fill="#fff" stroke="#dbc2a1" stroke-width="1"/><path d="M825.2,963.3 H822.6 Q821.2,963.3 821.2,964.6999999999999 V969.5 Q821.2,970.9 822.6,970.9 H827.4 Q828.8,970.9 828.8,969.5 V967.5" fill="none" stroke="#5f7330" stroke-width="1.35" stroke-linecap="round"/><path d="M824.4,967.5 L828.4,963.5" stroke="#5f7330" stroke-width="1.35" stroke-linecap="round"/><path d="M826.6,962.9 H829 V965.3Z" fill="#5f7330" stroke="#5f7330" stroke-width="0.8" stroke-linejoin="round"/></svg>
<svg style="left:0;top:0" width="1818" height="956"><circle cx="855" cy="966.9" r="11.6" fill="#fff" stroke="#dbc2a1" stroke-width="1"/><path d="M855,970.4 L851.4,966.9 A2.2,2.2 0 0 1 855,964.5 A2.2,2.2 0 0 1 858.6,966.9 Z" fill="none" stroke="#5f7330" stroke-width="1.3" stroke-linejoin="round"/></svg>
<div class="abs" style="left:13px;top:927px;width:110px;height:40px;border:1px solid #ddd;border-radius:5px;box-sizing:border-box;background:#fff"></div>
<div class="abs" style="left:32px;top:927px;width:16px;height:40px;background:#697840"></div>
<div class="abs" style="left:66.0px;top:928px;width:1px;height:30px;background:#ddd"></div>
<div class="abs" style="left:84.5px;top:928px;width:1px;height:30px;background:#ddd"></div>
<div class="abs" style="left:103.5px;top:928px;width:1px;height:30px;background:#ddd"></div>
<span class="t" style="left:19.40px;top:938.00px;font-size:12px;font-weight:400;color:#666;letter-spacing:0.000px;">&lt;</span>
<span class="t" style="left:36.40px;top:936.00px;font-size:14px;font-weight:700;color:#fff;letter-spacing:0.000px;">1</span>
<span class="t" style="left:52.90px;top:936.00px;font-size:14px;font-weight:400;color:#6b7a3e;letter-spacing:0.000px;">2</span>
<span class="t" style="left:71.50px;top:936.00px;font-size:14px;font-weight:400;color:#6b7a3e;letter-spacing:0.000px;">3</span>
<span class="t" style="left:90.00px;top:936.00px;font-size:14px;font-weight:400;color:#6b7a3e;letter-spacing:0.000px;">4</span>
<span class="t" style="left:109.40px;top:938.00px;font-size:12px;font-weight:400;color:#666;letter-spacing:0.000px;">&gt;</span>
<svg style="left:904px;top:214px;overflow:hidden" width="911" height="733" viewBox="904 214 911 733"><rect x="900" y="210" width="920" height="740" fill="#e5e4e0"/><g fill="#d9d7d2" stroke="#cbc9c3" stroke-width="0.6"><rect x="1147.0" y="695.5" width="12.0" height="9.0" transform="rotate(-12 1153.0 700.0)"/><rect x="1166.0" y="689.0" width="14.0" height="10.0" transform="rotate(-5 1173.0 694.0)"/><rect x="1188.0" y="688.0" width="14.0" height="10.0" transform="rotate(12 1195.0 693.0)"/><rect x="1175.5" y="720.0" width="9.0" height="26.0" transform="rotate(-5 1180.0 733.0)"/><rect x="1136.0" y="625.0" width="14.0" height="10.0" transform="rotate(20 1143.0 630.0)"/><rect x="1167.0" y="598.0" width="12.0" height="22.0" transform="rotate(-8 1173.0 609.0)"/><rect x="1183.5" y="625.0" width="13.0" height="12.0" transform="rotate(30 1190.0 631.0)"/><rect x="1193.0" y="640.0" width="12.0" height="12.0" transform="rotate(15 1199.0 646.0)"/><rect x="1184.0" y="769.5" width="12.0" height="11.0" transform="rotate(10 1190.0 775.0)"/><rect x="1176.5" y="832.0" width="13.0" height="12.0" transform="rotate(30 1183.0 838.0)"/><rect x="1197.0" y="823.5" width="10.0" height="9.0" transform="rotate(0 1202.0 828.0)"/><rect x="928.5" y="269.0" width="31.0" height="12.0" transform="rotate(0 944.0 275.0)"/><rect x="997.5" y="277.0" width="31.0" height="17.0" transform="rotate(0 1013.0 285.5)"/><rect x="904.0" y="274.0" width="10.0" height="40.0" transform="rotate(0 909.0 294.0)"/><rect x="927.0" y="376.5" width="20.0" height="9.0" transform="rotate(-8 937.0 381.0)"/><rect x="990.0" y="381.0" width="20.0" height="8.0" transform="rotate(-6 1000.0 385.0)"/><rect x="1023.0" y="374.5" width="20.0" height="9.0" transform="rotate(-6 1033.0 379.0)"/><rect x="957.0" y="374.5" width="18.0" height="9.0" transform="rotate(-8 966.0 379.0)"/><rect x="926.5" y="454.5" width="23.0" height="9.0" transform="rotate(0 938.0 459.0)"/><rect x="966.0" y="456.0" width="22.0" height="9.0" transform="rotate(-6 977.0 460.5)"/><rect x="1002.5" y="456.5" width="19.0" height="10.0" transform="rotate(-5 1012.0 461.5)"/><rect x="1033.0" y="449.0" width="20.0" height="12.0" transform="rotate(-6 1043.0 455.0)"/><rect x="904.0" y="457.5" width="8.0" height="9.0" transform="rotate(0 908.0 462.0)"/><rect x="904.0" y="508.5" width="9.0" height="13.0" transform="rotate(-8 908.5 515.0)"/><rect x="960.5" y="510.0" width="15.0" height="30.0" transform="rotate(-10 968.0 525.0)"/><rect x="918.0" y="403.0" width="18.0" height="10.0" transform="rotate(0 927.0 408.0)"/><rect x="1131.5" y="282.0" width="11.0" height="10.0" transform="rotate(30 1137.0 287.0)"/><rect x="1113.5" y="304.0" width="9.0" height="12.0" transform="rotate(0 1118.0 310.0)"/><rect x="1125.0" y="333.5" width="12.0" height="8.0" transform="rotate(35 1131.0 337.5)"/><rect x="1143.0" y="270.5" width="12.0" height="11.0" transform="rotate(0 1149.0 276.0)"/><rect x="1165.0" y="271.5" width="12.0" height="11.0" transform="rotate(0 1171.0 277.0)"/><rect x="1187.0" y="271.5" width="12.0" height="11.0" transform="rotate(0 1193.0 277.0)"/><rect x="921.0" y="684.0" width="26.0" height="12.0" transform="rotate(-3 934.0 690.0)"/><rect x="1006.0" y="665.5" width="26.0" height="11.0" transform="rotate(-12 1019.0 671.0)"/><rect x="979.0" y="716.0" width="22.0" height="18.0" transform="rotate(0 990.0 725.0)"/><rect x="1056.0" y="711.5" width="12.0" height="9.0" transform="rotate(0 1062.0 716.0)"/><rect x="1053.0" y="632.5" width="10.0" height="7.0" transform="rotate(30 1058.0 636.0)"/><rect x="1057.0" y="667.0" width="14.0" height="12.0" transform="rotate(35 1064.0 673.0)"/><rect x="1050.0" y="787.0" width="26.0" height="8.0" transform="rotate(0 1063.0 791.0)"/><rect x="1057.0" y="702.0" width="10.0" height="8.0" transform="rotate(0 1062.0 706.0)"/><rect x="946.0" y="674.5" width="6.0" height="9.0" transform="rotate(0 949.0 679.0)"/><rect x="915.5" y="789.5" width="23.0" height="11.0" transform="rotate(12 927.0 795.0)"/><rect x="1013.0" y="789.0" width="26.0" height="12.0" transform="rotate(6 1026.0 795.0)"/><rect x="1064.0" y="802.0" width="26.0" height="12.0" transform="rotate(14 1077.0 808.0)"/><rect x="1055.0" y="841.5" width="14.0" height="13.0" transform="rotate(-18 1062.0 848.0)"/><rect x="1075.0" y="880.5" width="14.0" height="25.0" transform="rotate(0 1082.0 893.0)"/><rect x="978.5" y="931.0" width="19.0" height="10.0" transform="rotate(5 988.0 936.0)"/><rect x="1009.5" y="931.5" width="13.0" height="13.0" transform="rotate(0 1016.0 938.0)"/><rect x="1044.0" y="929.0" width="18.0" height="10.0" transform="rotate(0 1053.0 934.0)"/><rect x="905.0" y="935.0" width="16.0" height="10.0" transform="rotate(8 913.0 940.0)"/><rect x="1020.0" y="218.0" width="24.0" height="12.0" transform="rotate(12 1032.0 224.0)"/><rect x="1375.0" y="220.0" width="22.0" height="18.0" transform="rotate(-12 1386.0 229.0)"/><rect x="1219.0" y="215.5" width="24.0" height="13.0" transform="rotate(10 1231.0 222.0)"/><rect x="1586.5" y="232.5" width="27.0" height="17.0" transform="rotate(0 1600.0 241.0)"/><rect x="1518.0" y="243.5" width="14.0" height="5.0" transform="rotate(0 1525.0 246.0)"/><rect x="1511.0" y="230.5" width="6.0" height="5.0" transform="rotate(0 1514.0 233.0)"/><rect x="1511.5" y="290.0" width="7.0" height="12.0" transform="rotate(0 1515.0 296.0)"/><rect x="1750.0" y="212.0" width="20.0" height="18.0" transform="rotate(-5 1760.0 221.0)"/><rect x="1802.0" y="327.0" width="14.0" height="34.0" transform="rotate(0 1809.0 344.0)"/><rect x="1802.0" y="379.0" width="14.0" height="12.0" transform="rotate(0 1809.0 385.0)"/><rect x="1771.0" y="397.0" width="14.0" height="10.0" transform="rotate(0 1778.0 402.0)"/><rect x="1800.0" y="396.5" width="16.0" height="21.0" transform="rotate(0 1808.0 407.0)"/><rect x="1744.0" y="530.0" width="72.0" height="46.0" transform="rotate(0 1780.0 553.0)"/><rect x="1799.0" y="497.0" width="18.0" height="24.0" transform="rotate(0 1808.0 509.0)"/><rect x="1794.5" y="581.0" width="21.0" height="30.0" transform="rotate(0 1805.0 596.0)"/><rect x="1647.0" y="411.5" width="14.0" height="11.0" transform="rotate(-18 1654.0 417.0)"/><rect x="1658.0" y="408.0" width="12.0" height="8.0" transform="rotate(20 1664.0 412.0)"/><rect x="1657.0" y="434.5" width="12.0" height="13.0" transform="rotate(0 1663.0 441.0)"/><rect x="1651.0" y="454.5" width="10.0" height="17.0" transform="rotate(0 1656.0 463.0)"/><rect x="1650.0" y="479.0" width="10.0" height="14.0" transform="rotate(0 1655.0 486.0)"/><rect x="1653.0" y="502.5" width="10.0" height="15.0" transform="rotate(0 1658.0 510.0)"/><rect x="1651.5" y="523.0" width="9.0" height="14.0" transform="rotate(0 1656.0 530.0)"/><rect x="1651.5" y="545.0" width="11.0" height="16.0" transform="rotate(0 1657.0 553.0)"/><rect x="1653.0" y="567.0" width="10.0" height="12.0" transform="rotate(0 1658.0 573.0)"/><rect x="1647.0" y="643.5" width="16.0" height="15.0" transform="rotate(30 1655.0 651.0)"/><rect x="1655.0" y="681.5" width="10.0" height="17.0" transform="rotate(-15 1660.0 690.0)"/><rect x="1647.0" y="705.0" width="14.0" height="14.0" transform="rotate(35 1654.0 712.0)"/><rect x="1652.0" y="769.0" width="16.0" height="12.0" transform="rotate(30 1660.0 775.0)"/><rect x="1652.5" y="792.0" width="11.0" height="16.0" transform="rotate(-20 1658.0 800.0)"/><rect x="1647.0" y="823.0" width="12.0" height="14.0" transform="rotate(40 1653.0 830.0)"/><rect x="1593.5" y="821.5" width="17.0" height="9.0" transform="rotate(0 1602.0 826.0)"/><rect x="1621.5" y="823.5" width="17.0" height="9.0" transform="rotate(-5 1630.0 828.0)"/><rect x="1569.5" y="819.5" width="15.0" height="9.0" transform="rotate(0 1577.0 824.0)"/><rect x="1690.5" y="902.0" width="33.0" height="14.0" transform="rotate(0 1707.0 909.0)"/><rect x="1732.0" y="901.0" width="30.0" height="14.0" transform="rotate(0 1747.0 908.0)"/><rect x="1772.5" y="901.0" width="25.0" height="14.0" transform="rotate(0 1785.0 908.0)"/><rect x="1280.0" y="900.0" width="14.0" height="10.0" transform="rotate(30 1287.0 905.0)"/><rect x="1229.0" y="905.0" width="16.0" height="8.0" transform="rotate(-18 1237.0 909.0)"/><rect x="1207.5" y="912.0" width="13.0" height="10.0" transform="rotate(5 1214.0 917.0)"/><rect x="1257.0" y="895.5" width="12.0" height="9.0" transform="rotate(-30 1263.0 900.0)"/><rect x="1217.5" y="277.5" width="13.0" height="11.0" transform="rotate(0 1224.0 283.0)"/><rect x="1141.0" y="394.5" width="12.0" height="9.0" transform="rotate(30 1147.0 399.0)"/><rect x="1224.0" y="243.5" width="7.0" height="7.0" transform="rotate(0 1227.5 247.0)"/><rect x="1187.9" y="314.6" width="10.6" height="9.1" transform="rotate(7 1193.2 319.1)"/><rect x="1207.5" y="314.1" width="11.0" height="7.8" transform="rotate(9 1213.0 318.0)"/><rect x="1290.0" y="327.9" width="12.3" height="7.9" transform="rotate(11 1296.2 331.8)"/><rect x="1310.7" y="333.6" width="11.2" height="8.7" transform="rotate(24 1316.3 338.0)"/><rect x="1329.4" y="342.8" width="11.9" height="9.0" transform="rotate(24 1335.4 347.3)"/><rect x="1346.5" y="363.5" width="9.7" height="7.3" transform="rotate(101 1351.4 367.1)"/><rect x="1187.5" y="277.9" width="9.3" height="7.2" transform="rotate(-4 1192.2 281.5)"/><rect x="1211.5" y="278.9" width="9.1" height="7.6" transform="rotate(4 1216.0 282.7)"/><rect x="1233.5" y="280.5" width="12.4" height="8.3" transform="rotate(7 1239.7 284.6)"/><rect x="1257.0" y="285.3" width="10.5" height="8.9" transform="rotate(11 1262.2 289.8)"/><rect x="1278.3" y="289.2" width="12.0" height="7.2" transform="rotate(10 1284.3 292.8)"/><rect x="1299.9" y="295.9" width="11.7" height="9.4" transform="rotate(12 1305.7 300.6)"/><rect x="1323.4" y="301.5" width="9.6" height="8.2" transform="rotate(25 1328.2 305.6)"/><rect x="1345.9" y="311.2" width="10.0" height="7.5" transform="rotate(33 1350.9 315.0)"/><rect x="1380.2" y="357.3" width="11.8" height="8.7" transform="rotate(116 1386.1 361.7)"/><rect x="1382.6" y="374.6" width="10.4" height="9.2" transform="rotate(105 1387.8 379.2)"/><rect x="1231.5" y="332.8" width="10.3" height="9.2" transform="rotate(123 1236.7 337.5)"/><rect x="1220.5" y="348.9" width="11.6" height="8.6" transform="rotate(140 1226.3 353.2)"/><rect x="1207.9" y="362.7" width="11.3" height="8.9" transform="rotate(153 1213.6 367.1)"/><rect x="1190.6" y="373.8" width="9.4" height="8.2" transform="rotate(147 1195.4 377.9)"/><rect x="1173.4" y="386.0" width="11.5" height="9.1" transform="rotate(151 1179.1 390.5)"/><rect x="1157.9" y="394.5" width="10.8" height="7.4" transform="rotate(166 1163.3 398.2)"/><rect x="1262.7" y="352.8" width="9.4" height="8.0" transform="rotate(131 1267.4 356.8)"/><rect x="1247.9" y="375.2" width="9.7" height="8.6" transform="rotate(135 1252.7 379.5)"/><rect x="1227.4" y="391.4" width="10.4" height="9.0" transform="rotate(140 1232.6 395.9)"/><rect x="1210.8" y="405.2" width="9.5" height="8.5" transform="rotate(145 1215.5 409.5)"/><rect x="1189.8" y="419.0" width="11.0" height="8.9" transform="rotate(153 1195.3 423.4)"/><rect x="1164.9" y="429.1" width="11.7" height="8.8" transform="rotate(175 1170.8 433.5)"/><rect x="1411.6" y="365.2" width="9.9" height="8.1" transform="rotate(61 1416.5 369.2)"/><rect x="1421.8" y="385.0" width="12.3" height="7.5" transform="rotate(60 1428.0 388.8)"/><rect x="1426.6" y="394.1" width="12.4" height="7.1" transform="rotate(98 1432.8 397.7)"/><rect x="1430.0" y="412.1" width="10.8" height="7.3" transform="rotate(109 1435.4 415.7)"/><rect x="1424.2" y="434.8" width="11.2" height="9.1" transform="rotate(95 1429.8 439.3)"/><rect x="1423.8" y="462.7" width="11.4" height="8.0" transform="rotate(74 1429.5 466.6)"/><rect x="1429.9" y="487.0" width="9.2" height="7.7" transform="rotate(70 1434.5 490.8)"/><rect x="1433.8" y="504.5" width="11.4" height="7.9" transform="rotate(83 1439.5 508.4)"/><rect x="1435.5" y="522.4" width="10.8" height="7.5" transform="rotate(103 1440.9 526.2)"/><rect x="1432.6" y="541.1" width="11.7" height="9.0" transform="rotate(98 1438.4 545.6)"/><rect x="1427.3" y="564.3" width="12.4" height="7.9" transform="rotate(93 1433.5 568.3)"/><rect x="1423.7" y="587.3" width="10.0" height="8.4" transform="rotate(93 1428.7 591.5)"/><rect x="1422.2" y="610.0" width="9.9" height="7.9" transform="rotate(98 1427.2 614.0)"/><rect x="1422.2" y="632.5" width="11.5" height="7.7" transform="rotate(83 1427.9 636.3)"/><rect x="1458.1" y="707.1" width="10.3" height="9.3" transform="rotate(12 1463.2 711.8)"/><rect x="1481.4" y="715.2" width="11.7" height="7.4" transform="rotate(9 1487.3 718.9)"/><rect x="1502.8" y="712.7" width="12.3" height="8.6" transform="rotate(-4 1509.0 717.0)"/><rect x="1526.3" y="714.6" width="11.7" height="7.9" transform="rotate(-5 1532.1 718.6)"/><rect x="1551.2" y="716.1" width="12.1" height="8.5" transform="rotate(-15 1557.3 720.3)"/><rect x="1573.7" y="713.6" width="11.9" height="7.5" transform="rotate(-7 1579.7 717.4)"/><rect x="1595.5" y="708.0" width="12.1" height="8.4" transform="rotate(-14 1601.5 712.2)"/><rect x="1440.4" y="329.8" width="9.5" height="8.2" transform="rotate(71 1445.1 334.0)"/><rect x="1444.4" y="345.2" width="11.9" height="8.2" transform="rotate(51 1450.4 349.3)"/><rect x="1455.6" y="363.0" width="10.5" height="9.4" transform="rotate(55 1460.8 367.7)"/><rect x="1459.6" y="439.5" width="12.3" height="7.8" transform="rotate(98 1465.8 443.5)"/><rect x="1461.8" y="455.7" width="9.1" height="8.8" transform="rotate(85 1466.4 460.1)"/><rect x="1463.4" y="474.7" width="10.7" height="8.3" transform="rotate(70 1468.7 478.9)"/><rect x="1469.6" y="549.3" width="10.0" height="9.1" transform="rotate(109 1474.6 553.8)"/><rect x="1460.5" y="611.7" width="11.8" height="7.8" transform="rotate(95 1466.4 615.6)"/><rect x="1458.8" y="633.6" width="11.7" height="7.1" transform="rotate(93 1464.7 637.2)"/><rect x="1461.8" y="652.5" width="10.1" height="7.0" transform="rotate(73 1466.8 656.0)"/><rect x="1460.6" y="661.0" width="11.8" height="9.3" transform="rotate(43 1466.5 665.7)"/><rect x="1466.4" y="670.1" width="11.1" height="8.7" transform="rotate(13 1472.0 674.5)"/><rect x="1484.7" y="676.2" width="9.4" height="7.5" transform="rotate(6 1489.4 679.9)"/><rect x="1506.4" y="674.9" width="10.3" height="9.1" transform="rotate(6 1511.5 679.5)"/><rect x="1527.0" y="679.2" width="10.5" height="7.8" transform="rotate(-4 1532.3 683.1)"/><rect x="1545.7" y="676.5" width="11.0" height="7.1" transform="rotate(-17 1551.2 680.1)"/><rect x="1566.6" y="674.9" width="10.6" height="7.0" transform="rotate(-5 1571.9 678.4)"/><rect x="1587.9" y="668.6" width="10.7" height="8.0" transform="rotate(-5 1593.2 672.6)"/><rect x="1501.7" y="523.0" width="11.4" height="7.3" transform="rotate(-29 1507.4 526.7)"/><rect x="1474.7" y="490.6" width="9.8" height="8.8" transform="rotate(2 1479.6 495.1)"/><rect x="1490.6" y="487.9" width="12.0" height="8.8" transform="rotate(-18 1496.6 492.3)"/><rect x="1608.6" y="465.5" width="11.5" height="7.0" transform="rotate(96 1614.3 469.1)"/><rect x="1611.0" y="486.0" width="10.1" height="8.8" transform="rotate(84 1616.1 490.4)"/><rect x="1609.9" y="507.5" width="10.3" height="8.4" transform="rotate(86 1615.0 511.7)"/><rect x="1609.4" y="526.8" width="10.3" height="8.6" transform="rotate(107 1614.5 531.1)"/><rect x="1607.6" y="540.8" width="12.3" height="9.0" transform="rotate(133 1613.7 545.3)"/><rect x="1600.3" y="553.9" width="11.5" height="9.1" transform="rotate(156 1606.0 558.5)"/><rect x="1649.5" y="463.4" width="10.5" height="9.2" transform="rotate(86 1654.8 468.0)"/><rect x="1648.9" y="486.8" width="11.8" height="7.7" transform="rotate(97 1654.8 490.6)"/><rect x="1646.9" y="508.8" width="11.9" height="9.2" transform="rotate(94 1652.9 513.4)"/><rect x="1647.7" y="534.5" width="11.0" height="7.7" transform="rotate(108 1653.2 538.3)"/><rect x="1484.2" y="607.6" width="9.7" height="8.9" transform="rotate(13 1489.1 612.0)"/><rect x="1504.8" y="611.7" width="10.6" height="7.5" transform="rotate(13 1510.2 615.4)"/><rect x="1531.9" y="614.3" width="9.3" height="9.0" transform="rotate(-7 1536.6 618.8)"/><rect x="1555.1" y="611.6" width="12.1" height="8.3" transform="rotate(-9 1561.1 615.8)"/><rect x="1579.8" y="603.1" width="9.6" height="8.8" transform="rotate(-27 1584.6 607.5)"/><rect x="1597.5" y="598.8" width="9.5" height="7.1" transform="rotate(-9 1602.3 602.4)"/><rect x="1488.8" y="570.0" width="11.1" height="7.9" transform="rotate(3 1494.3 574.0)"/><rect x="1510.3" y="576.2" width="12.0" height="8.2" transform="rotate(18 1516.3 580.3)"/><rect x="1527.6" y="575.2" width="12.3" height="8.9" transform="rotate(-8 1533.8 579.7)"/><rect x="1546.7" y="576.8" width="9.7" height="7.5" transform="rotate(-23 1551.6 580.6)"/><rect x="1566.5" y="569.2" width="10.6" height="9.4" transform="rotate(-16 1571.8 573.8)"/><rect x="1229.8" y="542.7" width="11.0" height="8.6" transform="rotate(86 1235.3 547.0)"/><rect x="1228.3" y="564.3" width="9.6" height="9.4" transform="rotate(89 1233.1 569.0)"/><rect x="1229.9" y="586.7" width="10.2" height="9.3" transform="rotate(85 1235.0 591.3)"/><rect x="1227.1" y="608.7" width="11.5" height="8.6" transform="rotate(95 1232.8 613.0)"/><rect x="1229.4" y="627.9" width="12.3" height="8.7" transform="rotate(105 1235.6 632.2)"/><rect x="1227.2" y="639.5" width="10.1" height="7.6" transform="rotate(127 1232.3 643.3)"/><rect x="1218.4" y="712.4" width="9.0" height="8.8" transform="rotate(81 1222.9 716.8)"/><rect x="1221.6" y="732.7" width="12.3" height="9.2" transform="rotate(79 1227.8 737.2)"/><rect x="1223.7" y="753.1" width="12.3" height="9.1" transform="rotate(81 1229.8 757.7)"/><rect x="1224.4" y="774.9" width="10.7" height="8.6" transform="rotate(93 1229.7 779.2)"/><rect x="1226.0" y="797.3" width="10.9" height="7.4" transform="rotate(92 1231.4 801.0)"/><rect x="1226.7" y="817.7" width="9.9" height="9.1" transform="rotate(86 1231.7 822.3)"/><rect x="1266.1" y="520.3" width="9.4" height="9.4" transform="rotate(96 1270.8 525.0)"/><rect x="1267.1" y="543.1" width="10.7" height="7.7" transform="rotate(85 1272.4 547.0)"/><rect x="1263.4" y="564.3" width="12.5" height="9.3" transform="rotate(98 1269.7 569.0)"/><rect x="1264.4" y="586.8" width="11.5" height="7.7" transform="rotate(82 1270.1 590.6)"/><rect x="1264.6" y="609.5" width="9.5" height="7.0" transform="rotate(88 1269.3 613.0)"/><rect x="1264.4" y="634.0" width="12.2" height="7.5" transform="rotate(100 1270.5 637.7)"/><rect x="1253.8" y="662.7" width="11.5" height="7.5" transform="rotate(138 1259.6 666.4)"/><rect x="1246.8" y="683.6" width="9.7" height="8.5" transform="rotate(71 1251.7 687.9)"/><rect x="1254.7" y="704.8" width="9.2" height="8.8" transform="rotate(74 1259.3 709.3)"/><rect x="1258.5" y="728.1" width="10.2" height="9.1" transform="rotate(89 1263.6 732.7)"/><rect x="1260.0" y="751.0" width="10.7" height="9.2" transform="rotate(94 1265.4 755.6)"/><rect x="1260.6" y="773.9" width="9.6" height="7.9" transform="rotate(86 1265.4 777.8)"/><rect x="1260.0" y="796.4" width="10.8" height="7.3" transform="rotate(88 1265.4 800.1)"/><rect x="1263.3" y="818.9" width="11.5" height="8.0" transform="rotate(88 1269.1 822.8)"/><rect x="1120.2" y="546.8" width="10.8" height="8.3" transform="rotate(112 1125.6 550.9)"/><rect x="1122.9" y="624.3" width="9.9" height="9.0" transform="rotate(49 1127.8 628.8)"/><rect x="1154.6" y="561.0" width="11.0" height="8.3" transform="rotate(114 1160.1 565.2)"/><rect x="1147.1" y="582.4" width="9.2" height="7.3" transform="rotate(113 1151.7 586.1)"/><rect x="1144.5" y="588.5" width="10.4" height="7.3" transform="rotate(51 1149.7 592.1)"/><rect x="1152.9" y="605.7" width="11.6" height="7.4" transform="rotate(57 1158.7 609.4)"/><rect x="1166.6" y="624.4" width="11.9" height="8.3" transform="rotate(61 1172.6 628.5)"/><rect x="1135.9" y="696.1" width="10.2" height="8.1" transform="rotate(-31 1141.0 700.1)"/><rect x="1150.1" y="691.2" width="12.0" height="7.1" transform="rotate(-6 1156.1 694.8)"/><rect x="1168.3" y="686.4" width="10.5" height="8.6" transform="rotate(-4 1173.5 690.7)"/><rect x="1188.1" y="683.4" width="10.8" height="7.1" transform="rotate(5 1193.5 687.0)"/><rect x="1191.2" y="647.6" width="11.2" height="7.7" transform="rotate(-2 1196.9 651.4)"/><rect x="1331.1" y="562.2" width="10.5" height="9.4" transform="rotate(91 1336.3 566.9)"/><rect x="1331.9" y="584.1" width="11.1" height="9.4" transform="rotate(84 1337.5 588.8)"/><rect x="1332.7" y="607.2" width="9.5" height="7.3" transform="rotate(91 1337.4 610.9)"/><rect x="1332.3" y="629.5" width="9.9" height="7.2" transform="rotate(86 1337.2 633.1)"/><rect x="1330.3" y="654.1" width="11.3" height="7.5" transform="rotate(81 1335.9 657.9)"/><rect x="1329.3" y="686.7" width="10.1" height="7.6" transform="rotate(105 1334.3 690.5)"/><rect x="1323.1" y="712.9" width="9.0" height="7.9" transform="rotate(89 1327.6 716.9)"/><rect x="1367.2" y="563.4" width="11.7" height="7.4" transform="rotate(87 1373.1 567.1)"/><rect x="1370.1" y="585.1" width="10.4" height="8.1" transform="rotate(84 1375.3 589.2)"/><rect x="1366.3" y="607.4" width="11.6" height="7.4" transform="rotate(98 1372.1 611.1)"/><rect x="1366.9" y="628.3" width="12.0" height="9.1" transform="rotate(91 1372.9 632.8)"/><rect x="1366.8" y="681.7" width="11.7" height="8.8" transform="rotate(126 1372.7 686.1)"/><rect x="1362.3" y="698.0" width="11.7" height="8.5" transform="rotate(97 1368.1 702.3)"/><rect x="1360.5" y="712.4" width="11.7" height="9.2" transform="rotate(87 1366.4 716.9)"/><rect x="1358.7" y="729.0" width="11.5" height="7.7" transform="rotate(69 1364.5 732.9)"/><rect x="1374.9" y="689.9" width="12.0" height="8.2" transform="rotate(4 1380.9 694.0)"/><rect x="1397.5" y="689.3" width="11.0" height="8.5" transform="rotate(-7 1403.0 693.5)"/><rect x="1375.3" y="652.3" width="9.7" height="8.1" transform="rotate(7 1380.2 656.3)"/><rect x="1396.7" y="654.4" width="10.7" height="9.3" transform="rotate(-1 1402.0 659.0)"/><rect x="1376.7" y="785.7" width="10.3" height="8.5" transform="rotate(13 1381.8 790.0)"/><rect x="1395.8" y="791.2" width="9.3" height="7.9" transform="rotate(21 1400.5 795.2)"/><rect x="1416.6" y="798.1" width="12.4" height="8.2" transform="rotate(23 1422.8 802.2)"/><rect x="1439.4" y="806.2" width="10.9" height="9.0" transform="rotate(11 1444.9 810.7)"/><rect x="1463.2" y="812.1" width="10.8" height="7.3" transform="rotate(11 1468.6 815.7)"/><rect x="1486.4" y="813.3" width="12.1" height="8.1" transform="rotate(7 1492.4 817.3)"/><rect x="1509.6" y="812.6" width="9.7" height="7.5" transform="rotate(1 1514.5 816.3)"/><rect x="1530.8" y="812.3" width="11.2" height="7.1" transform="rotate(8 1536.5 815.8)"/><rect x="1554.1" y="811.9" width="9.0" height="7.8" transform="rotate(3 1558.6 815.8)"/><rect x="1575.6" y="812.9" width="10.7" height="8.4" transform="rotate(-6 1581.0 817.1)"/><rect x="1386.1" y="749.2" width="9.5" height="8.9" transform="rotate(9 1390.9 753.6)"/><rect x="1407.3" y="756.7" width="11.9" height="8.5" transform="rotate(21 1413.3 760.9)"/><rect x="1428.2" y="764.0" width="10.1" height="8.8" transform="rotate(21 1433.2 768.4)"/><rect x="1447.2" y="769.3" width="12.2" height="8.5" transform="rotate(7 1453.3 773.6)"/><rect x="1466.9" y="773.2" width="12.1" height="8.5" transform="rotate(-1 1472.9 777.4)"/><rect x="1488.1" y="773.8" width="9.2" height="9.3" transform="rotate(-4 1492.7 778.5)"/><rect x="1509.6" y="773.4" width="10.1" height="8.5" transform="rotate(6 1514.7 777.6)"/><rect x="1531.5" y="773.1" width="10.4" height="8.8" transform="rotate(-4 1536.7 777.5)"/><rect x="1552.7" y="774.1" width="11.8" height="7.6" transform="rotate(-0 1558.5 777.9)"/><rect x="1575.2" y="776.4" width="10.0" height="8.4" transform="rotate(6 1580.2 780.6)"/></g><path d="M1743,686 Q1743,675 1756.5,661.9 Q1775,650.5 1797,650 L1820,652 L1820,707 L1770,707 Q1752,702 1746,692.7Z" fill="#75cff0"/><path d="M1300.4,946 L1410,919 L1512,903.6 L1589,895 L1674.7,881.5 L1785.4,862.2 L1820,855" fill="none" stroke="#a9cdee" stroke-width="1"/><path d="M1069.6,267.0 L1064.8,330.0 L1071.5,397.0 L1087.0,493.0 L1100.0,581.0 L1117.0,677.0 L1129.0,765.0 L1144.0,857.0 L1157.0,946.0 M1047.4,338.0 L1053.0,396.0 L1069.0,493.0 L1082.0,581.0 L1099.0,677.0 L1111.0,765.0 L1126.0,857.0 L1139.0,946.0 M904.0,226.9 L994.5,226.9 L1048.0,214.0 M923.0,214.0 L923.0,226.9 M959.4,214.0 L959.4,226.9 M994.5,214.0 L994.5,226.9 M904.0,243.8 L1045.5,243.8 L1046.6,300.0 L1047.4,338.0 L1053.0,396.0 L1056.0,420.0 M916.5,243.8 L911.7,361.0 M976.2,243.8 L974.9,350.0 M904.0,362.2 L1046.5,338.5 M944.4,357.0 L948.3,397.0 L949.2,422.5 M981.0,350.7 L985.8,397.0 L986.8,419.5 M1014.3,345.5 L1019.0,397.0 L1019.5,416.8 M908.8,362.0 L909.8,424.0 M994.0,244.0 L994.0,247.5 L1004.0,247.5 L1004.0,244.0 M904.0,424.0 L1058.0,411.4 M904.0,440.3 L1060.0,426.8 M917.5,440.3 L920.4,499.0 M954.4,437.4 L961.2,500.0 M989.7,434.0 L995.5,501.0 M1021.8,431.7 L1028.8,502.0 M904.0,500.0 L1069.6,502.5 M904.0,540.5 L906.9,540.5 L907.9,547.2 L1077.3,551.0 M907.9,547.2 L909.8,581.0 L915.0,615.0 M986.8,550.0 L985.8,581.0 M909.8,555.0 L940.6,581.0 M1039.7,551.0 L1046.5,581.0 M940.6,581.0 L953.0,590.0 M985.8,581.0 L985.0,593.0 L1034.0,588.5 L1086.0,583.0 M985.0,612.0 L1076.0,597.0 L1083.0,600.0 L1090.0,637.0 L1041.0,645.0 L978.0,654.0 M953.0,617.0 L908.0,640.0 L905.5,660.0 M972.0,619.0 L978.0,654.0 M1027.0,600.0 L1033.0,643.0 M904.0,660.0 L935.0,661.0 L978.0,654.0 L1041.0,645.0 M935.0,661.0 L956.0,662.0 M964.0,658.0 L1000.0,680.0 L1013.0,690.0 M1066.0,642.0 L1046.0,665.0 L1029.0,684.0 M1038.0,695.0 L1100.0,687.0 M958.0,706.0 L1000.0,713.0 L1016.0,712.0 M958.0,706.0 L957.0,750.0 M904.0,738.0 L1010.0,752.0 L1018.0,748.0 L1018.0,715.0 M1032.0,708.0 L1030.0,753.0 L1036.0,757.0 L1100.0,765.0 M1032.0,725.0 L1106.0,729.0 M904.0,662.0 L906.0,745.0 M947.5,765.0 L948.3,863.0 M996.5,768.0 L998.0,916.0 M1047.4,774.6 L1053.8,865.0 M998.0,864.0 L1126.4,867.0 M904.0,916.0 L1135.0,916.8 M1004.0,917.0 L1005.0,946.0 M1041.0,917.0 L1041.0,946.0 M937.7,938.0 L937.7,946.0 M971.4,938.0 L971.4,946.0 M904.0,757.0 L971.4,765.0 L1102.3,780.4 M1115.8,782.3 L1128.0,840.0 L1154.3,946.0 M1104.0,784.0 L1122.0,870.0 L1140.0,946.0 M1096.0,946.0 L1115.0,929.0 L1135.0,923.0 M1108.0,946.0 L1122.0,934.0 L1137.0,929.0 M1120.0,946.0 L1130.0,940.0 L1139.0,937.0 M1300.4,765.0 L1300.4,946.0 M1300.4,905.5 L1493.0,905.5 L1512.0,898.0 M1494.9,846.8 L1493.0,902.7 M1334.0,816.0 L1400.5,830.5 L1444.8,843.9 L1473.7,846.8 L1512.0,844.9 L1674.7,850.7 M1512.0,896.9 L1563.0,874.7 L1673.7,877.6 M1674.7,883.4 L1747.8,869.9 L1777.7,870.9 L1816.0,857.4 M1208.0,899.0 L1222.0,893.0 L1246.0,888.0 M1224.0,893.0 L1237.0,946.0 M1246.0,888.0 L1275.0,946.0 M1257.0,879.0 L1290.0,898.0 L1300.4,900.0 M1301.0,940.0 L1340.0,935.0 L1370.0,925.0 L1402.0,922.0 M1402.0,922.0 L1403.0,946.0 M1417.0,946.0 L1417.0,922.0 L1440.0,917.0 L1460.0,913.0 L1475.0,906.0 M1566.3,847.0 L1566.3,806.0 M1588.6,848.0 L1588.6,806.0 M1611.5,849.0 L1612.0,809.0 M1630.0,810.0 L1650.0,850.0 M1639.0,797.0 L1676.0,806.0 M1638.0,784.0 L1677.0,767.0 M1628.0,778.0 L1632.0,765.0 M1684.3,293.0 L1684.3,581.0 L1683.4,629.0 L1679.5,658.0 L1677.6,765.0 L1674.7,851.6 L1672.8,946.0 M1684.3,522.0 L1816.0,521.0 M1643.0,431.3 L1684.3,431.3 M1643.0,454.2 L1684.3,454.2 M1643.0,476.5 L1684.3,476.5 M1643.0,499.4 L1684.3,499.4 M1643.0,521.8 L1684.3,521.8 M1643.0,544.3 L1684.3,544.3 M1640.0,566.4 L1684.3,566.4 M1643.0,440.0 L1643.0,545.0 L1638.0,566.0 L1642.0,580.0 M1646.0,415.0 L1671.0,397.0 M1671.0,397.0 L1683.4,389.0 M1645.0,697.0 L1679.0,704.0 M1640.0,678.0 L1681.0,654.0 M1632.0,701.0 L1654.0,741.0 L1677.0,741.0 M1538.0,213.0 L1555.3,244.8 L1555.9,284.2 M1588.0,213.0 L1582.3,284.2 M1638.0,213.0 L1641.4,280.4 M1736.3,213.0 L1736.3,265.0 M1512.0,285.2 L1635.2,282.3 L1704.5,272.7 L1816.0,250.5 M1434.0,285.0 L1512.0,285.2 M1548.6,302.5 L1552.7,367.0 M1582.3,302.5 L1582.3,368.0 M1616.5,302.5 L1617.0,367.0 M1650.6,302.5 L1652.0,366.0 M1582.3,368.0 L1683.4,364.7 M1683.4,297.7 L1736.3,298.7 L1736.3,288.0 L1746.0,291.0 L1766.0,288.0 L1775.0,280.0 L1790.0,285.0 L1816.0,272.0 M1512.0,376.6 L1547.6,369.0 L1580.4,376.6 L1589.0,370.0 L1683.4,365.0 M1514.9,305.4 L1519.7,372.8 M1580.4,376.6 L1572.6,397.0 M1589.0,370.0 L1608.3,397.0 M1638.0,368.0 L1635.2,386.3 M1683.4,387.2 L1670.0,397.0 M1208.0,231.0 L1255.0,236.0 L1308.5,243.0 M1252.3,213.0 L1252.3,235.0 M1308.5,213.0 L1308.5,243.0 L1290.0,241.0 M1355.0,213.0 L1355.0,262.0 M1418.0,213.0 L1416.5,283.0 M1440.5,213.0 L1440.5,285.0 M1440.5,224.5 L1478.0,228.8 L1478.0,285.0 M1122.5,247.7 L1208.0,248.6 L1270.0,258.0 L1320.0,275.0 L1375.0,292.0 L1418.0,300.0 M1224.4,249.0 L1224.4,289.0 M1247.5,252.0 L1246.0,292.0 M1273.0,259.0 L1270.0,297.0 M1297.5,266.0 L1291.0,303.0 M1323.0,275.0 L1315.0,311.0 M1349.0,285.0 L1340.0,322.0 M1378.0,292.0 L1358.0,324.0 M1393.0,297.0 L1387.0,341.0 M1208.0,287.1 L1250.0,291.0 L1300.0,304.0 L1340.0,322.0 L1368.0,340.0 L1383.0,346.0 L1419.0,331.0 M1121.6,250.5 L1089.8,264.0 L1084.0,272.7 L1082.1,309.3 L1085.9,335.3 M1084.0,281.3 L1133.1,297.7 M1085.9,335.3 L1134.1,311.2 M1064.8,347.8 L1085.9,335.3 M1064.8,348.7 L1111.9,354.5 L1144.7,356.4 L1171.6,354.5 L1192.8,343.9 M1121.6,250.5 L1140.8,287.1 M1140.8,287.1 L1208.0,287.1 M1158.1,247.7 L1158.1,287.0 M1180.3,247.7 L1180.3,287.0 M1202.4,247.7 L1202.4,287.0 M1147.5,326.0 L1146.6,355.5 M1065.7,347.8 L1071.5,397.0 L1077.0,430.0 L1086.0,489.4 L1098.0,560.0 L1103.0,600.0 M1111.0,354.5 L1127.3,392.0 L1136.0,399.0 M1147.5,356.4 L1160.1,386.3 L1175.0,400.0 M1170.0,318.0 L1178.0,340.0 L1195.0,348.0 M1195.0,304.0 L1197.0,330.0 L1194.0,344.0 M1224.0,304.0 L1222.0,330.0 L1208.0,345.0 M1077.3,418.2 L1118.7,412.4 M1126.4,428.0 L1091.7,487.5 M1091.7,487.5 L1208.0,450.9 M1142.7,430.0 L1157.2,466.3 M1165.8,418.2 L1183.2,456.7 M1187.0,408.5 L1208.0,449.0 M1123.5,481.7 L1144.7,512.5 M1167.8,465.3 L1208.0,570.3 M1086.9,489.4 L1088.8,506.7 L1135.0,522.1 M1093.6,531.8 L1137.9,544.3 M1137.9,544.3 L1125.4,581.0 M1166.8,520.2 L1208.0,501.9 M1150.4,553.0 L1208.0,578.0 M1208.0,450.9 L1232.0,444.0 M1208.0,501.9 L1228.0,493.0 M1256.1,581.0 L1256.1,640.7 L1250.0,655.0 L1244.6,665.7 L1236.9,677.3 M1306.2,581.0 L1304.3,692.7 L1303.3,765.0 M1349.5,581.0 L1349.5,671.5 L1352.0,680.0 L1356.5,686.0 M1363.0,581.0 L1363.0,665.7 L1365.0,672.0 L1369.7,676.0 M1404.4,581.0 L1401.5,671.0 M1444.8,592.6 L1441.9,644.5 L1439.0,667.0 M1256.1,598.3 L1305.2,598.3 M1256.1,620.5 L1305.2,620.5 M1255.2,641.6 L1304.3,649.3 M1245.5,665.7 L1303.3,686.9 M1244.6,699.4 L1304.3,691.7 M1249.4,723.5 L1303.3,715.8 M1254.2,747.5 L1302.3,740.8 M1305.2,582.0 L1349.5,582.0 M1305.2,604.1 L1349.5,604.1 M1305.2,628.2 L1349.5,628.2 M1305.2,651.3 L1349.5,651.3 M1305.2,669.6 L1349.5,669.6 M1304.3,691.7 L1350.0,691.7 M1304.3,713.9 L1341.5,713.9 M1303.3,732.1 L1341.0,732.1 M1303.3,755.2 L1335.0,755.2 L1340.8,746.6 M1363.0,601.2 L1402.5,601.2 M1363.0,625.7 L1402.5,625.7 M1363.0,648.4 L1402.5,648.4 M1404.4,593.5 L1444.8,594.5 M1403.4,619.5 L1442.9,621.4 M1402.5,643.0 L1441.9,645.5 M1208.0,606.0 L1239.8,605.6 M1225.3,607.0 L1208.0,648.4 M1239.8,581.0 L1241.7,636.8 L1231.1,659.9 L1219.6,662.8 L1208.0,657.0 M1211.9,581.0 L1222.4,605.0 M1236.9,681.0 L1244.6,700.4 L1249.4,723.5 L1254.2,747.5 L1256.1,765.0 M1228.0,687.0 L1236.0,720.0 L1241.0,750.0 L1242.7,765.0 M1208.0,713.9 L1234.0,711.9 M1208.0,741.8 L1239.5,737.9 M1208.0,695.0 L1228.0,688.0 M1369.7,677.3 L1362.0,688.8 L1356.2,711.9 L1357.2,735.0 L1364.0,750.4 L1375.5,762.0 M1371.7,688.8 L1404.4,689.2 L1442.9,685.9 L1458.3,704.2 L1477.5,711.9 L1512.0,713.9 M1370.7,698.4 L1399.6,723.5 L1387.0,727.3 L1360.1,726.4 M1405.3,689.8 L1406.3,722.5 L1399.6,723.5 M1406.3,722.5 L1433.3,731.2 L1456.4,738.9 L1496.8,741.8 L1512.0,746.6 M1429.4,688.8 L1428.4,729.0 M1458.3,704.2 L1444.8,735.0 M1476.6,711.9 L1469.8,740.8 M1500.6,713.9 L1496.8,741.8 M1360.1,726.4 L1362.0,748.5 L1371.7,761.0 M1406.3,723.5 L1401.5,765.0 M1433.3,731.2 L1421.7,765.0 M1456.4,738.9 L1446.7,765.0 M1470.8,741.8 L1466.0,765.0 M1493.0,742.7 L1491.0,765.0 M1458.3,602.2 L1496.8,603.1 L1512.0,604.0 M1457.3,633.0 L1500.6,634.9 M1454.4,658.0 L1496.8,658.0 L1500.6,652.2 L1512.0,646.5 M1500.6,603.0 L1500.6,714.0 M1456.0,597.0 L1454.4,658.0 M1459.0,581.0 L1512.0,583.0 M1512.0,422.0 L1570.7,421.1 L1571.7,397.0 M1570.7,421.1 L1576.5,444.2 L1587.1,467.3 L1589.0,491.3 L1587.1,514.4 L1584.2,529.8 L1578.4,535.6 M1571.7,417.2 L1614.0,423.0 M1576.5,444.2 L1627.5,445.1 M1587.1,467.3 L1627.5,468.2 M1589.0,491.3 L1627.5,491.3 M1587.1,514.4 L1627.5,515.4 M1584.2,529.8 L1625.6,546.2 M1627.5,443.0 L1628.5,500.0 L1626.0,546.0 M1538.0,422.0 L1536.1,456.7 L1531.5,473.5 M1512.0,454.8 L1529.3,458.6 L1536.1,456.7 M1576.5,450.0 L1546.0,479.0 M1550.5,490.4 L1587.1,488.5 M1546.5,501.0 L1584.2,529.8 M1533.5,507.0 L1553.4,547.2 M1578.4,535.6 L1553.4,547.2 L1512.0,553.9 M1512.0,517.3 L1520.7,551.0 M1578.4,535.6 L1602.5,574.1 M1564.0,544.3 L1577.5,579.9 M1546.7,551.0 L1553.4,581.0 M1526.4,553.9 L1523.6,581.0 M1606.3,397.0 L1618.9,411.4 M1625.6,546.2 L1612.0,565.0 L1604.0,575.0 M1171.6,354.5 L1189.0,392.0 L1200.0,397.0 M1192.8,343.9 L1208.0,367.0 M1208.0,345.0 L1220.0,333.0 M1160.1,386.3 L1150.0,400.0 M1127.3,392.0 L1119.0,399.0 M1175.0,400.0 L1189.0,392.0 M1208.0,367.0 L1222.0,362.0 L1240.0,348.0 M1200.0,397.0 L1213.0,388.0 M1120.6,711.9 L1196.7,712.9 L1208.0,706.0 M1127.3,758.1 L1208.0,752.4 M1158.1,690.7 L1161.0,711.9 M1176.4,675.3 L1184.1,711.9 M1203.4,681.1 L1196.7,712.9 M1105.2,605.0 L1123.5,601.2 M1121.6,673.4 L1135.0,671.5 L1151.4,658.0 L1150.4,644.5 L1137.9,619.5 L1123.5,601.2 L1126.0,585.0 M1154.3,617.6 L1177.4,606.0 L1208.0,606.0 M1169.7,652.2 L1190.0,625.0 L1208.0,602.2 M1168.7,651.3 L1181.2,655.1 L1208.0,652.2 M1134.0,797.7 L1208.0,796.8 M1180.3,797.7 L1203.4,845.9 L1197.0,856.0 M1144.7,873.8 L1193.8,866.1 M1152.4,912.3 L1196.7,888.2 M1208.0,894.0 L1191.8,946.0 M1208.0,606.0 L1245.0,607.0 M1208.0,652.2 L1240.0,652.0 M1208.0,706.0 L1232.0,700.0 M1208.0,752.4 L1241.0,752.0 M1208.0,796.8 L1244.0,797.0 M1208.0,449.0 L1233.0,442.2 L1307.2,438.4 M1233.0,442.2 L1239.8,474.0 M1287.9,440.3 L1258.0,474.0 M1307.2,438.4 L1307.2,581.0 M1307.2,469.2 L1339.9,473.0 L1394.8,478.8 L1441.0,471.1 M1308.1,444.2 L1336.5,427.0 M1292.7,401.8 L1291.8,438.4 M1292.7,401.8 L1335.5,412.0 M1239.8,440.3 L1252.3,421.1 L1292.7,397.0 M1208.0,402.8 L1233.0,442.2 M1349.5,432.5 L1346.6,472.1 M1362.5,429.0 L1394.8,477.9 M1368.0,423.0 L1408.2,436.5 L1398.6,477.9 M1365.5,404.0 L1412.1,411.4 L1414.0,402.8 L1449.0,404.7 M1412.1,411.4 L1408.2,436.5 M1412.1,424.0 L1444.0,431.7 M1406.3,450.9 L1441.5,450.9 M1339.9,473.0 L1352.0,506.0 M1380.3,478.8 L1369.0,507.5 M1398.6,477.9 L1410.2,506.7 L1415.0,520.2 L1412.1,543.3 L1406.3,581.0 M1410.2,506.7 L1446.0,492.3 M1377.0,515.4 L1410.2,506.7 M1307.2,501.0 L1345.0,514.4 M1377.0,529.5 L1412.1,540.4 M1415.0,522.1 L1453.0,521.2 M1412.1,547.2 L1452.5,543.3 M1307.2,534.7 L1351.0,534.7 M1307.2,558.7 L1351.0,558.7 M1360.5,554.9 L1410.2,554.9 M1360.5,578.0 L1406.3,578.0 M1373.0,536.0 L1361.0,544.5 L1360.3,581.0 M1257.1,510.6 L1306.2,511.6 M1257.1,532.7 L1306.2,533.7 M1257.1,554.9 L1306.2,555.8 M1257.1,577.0 L1306.2,578.0 M1262.0,489.0 L1306.2,486.5 M1257.1,505.0 L1257.1,581.0 M1208.0,501.0 L1227.3,495.2 M1208.0,525.0 L1241.7,525.0 L1247.0,540.0 L1247.3,581.0 M1208.0,549.1 L1246.7,548.1 M1232.0,509.0 L1240.0,517.0 L1241.7,525.0 M1459.5,456.7 L1512.0,454.8 M1459.5,469.2 L1512.0,471.1 M1456.4,469.2 L1466.0,507.7 L1512.0,504.8 M1488.1,471.1 L1491.0,505.8 M1466.0,402.8 L1512.0,404.7 M1465.0,402.8 L1464.0,422.0 L1459.5,456.7 M1471.8,524.0 L1464.0,556.8 L1512.0,554.9 M1492.9,520.2 L1496.8,554.9 M1470.8,523.1 L1512.0,518.3 M1462.0,517.0 L1471.8,524.0 M1455.0,560.0 L1464.0,556.8 M1440.0,397.0 L1443.0,404.7 M1228.0,397.0 L1246.0,420.0 M1225.2,304.7 L1222.5,333.4 M1246.7,307.6 L1244.6,319.7 M1222.5,333.4 L1244.6,319.7 M1289.3,317.2 L1284.0,337.8 M1310.3,323.2 L1297.6,365.1 M1284.0,337.8 L1297.6,365.1 M1330.9,330.0 L1314.9,372.4 M1297.6,365.1 L1314.9,372.4 M1350.6,338.8 L1337.3,366.0 M1314.9,372.4 L1337.3,366.0 M1369.3,349.2 L1363.9,356.8 M1337.3,366.0 L1363.9,356.8 M1370.1,360.8 L1361.0,355.0 M1363.9,356.8 L1361.0,355.0 M1362.6,382.7 L1322.2,370.3 M1377.2,365.4 L1403.9,382.6 M1370.7,385.1 L1405.4,395.8 M1403.9,382.6 L1405.4,395.8 M1252.4,336.6 L1232.7,328.4 M1242.7,355.5 L1214.9,337.1 M1232.7,328.4 L1214.9,337.1 M1260.1,339.8 L1290.9,352.7 M1249.8,360.1 L1291.3,387.5 M1388.2,350.4 L1392.6,360.3 M1408.0,343.5 L1410.9,358.6 M1392.6,360.3 L1410.9,358.6 M1424.5,351.0 L1412.9,354.9 M1434.3,371.9 L1405.9,389.3 M1520.9,705.5 L1517.9,749.2 M1543.2,706.5 L1543.5,748.8 M1517.9,749.2 L1543.5,748.8 M1565.9,704.3 L1573.5,747.4 M1543.5,748.8 L1573.5,747.4 M1587.6,699.9 L1596.9,745.8 M1573.5,747.4 L1596.9,745.8 M1609.2,695.3 L1619.5,741.0 M1596.9,745.8 L1619.5,741.0 M1429.8,327.6 L1454.0,326.0 M1433.9,347.9 L1467.0,337.0 M1454.0,326.0 L1467.0,337.0 M1442.7,366.8 L1478.8,344.7 M1467.0,337.0 L1478.8,344.7 M1454.3,385.3 L1493.5,359.9 M1478.8,344.7 L1493.5,359.9 M1521.6,695.6 L1524.5,651.9 M1543.2,696.6 L1542.9,651.3 M1524.5,651.9 L1542.9,651.3 M1564.2,694.5 L1556.4,649.9 M1542.9,651.3 L1556.4,649.9 M1585.6,690.2 L1576.9,647.3 M1556.4,649.9 L1576.9,647.3 M1607.1,685.7 L1597.1,641.5 M1576.9,647.3 L1597.1,641.5 M1523.3,603.0 L1515.0,647.5 M1546.5,604.4 L1551.6,649.5 M1568.7,599.5 L1581.0,643.1 M1551.6,649.5 L1581.0,643.1 M1589.8,591.8 L1607.1,635.2 M1581.0,643.1 L1607.1,635.2 M1610.0,586.2 L1617.6,630.8 M1607.1,635.2 L1617.6,630.8 M1244.8,833.4 L1223.5,833.0 M1252.2,767.3 L1295.9,765.1 M1253.1,789.4 L1296.9,787.9 M1295.9,765.1 L1296.9,787.9 M1253.8,811.4 L1300.5,810.4 M1296.9,787.9 L1300.5,810.4 M1253.9,833.6 L1302.2,834.6 M1300.5,810.4 L1302.2,834.6 M1374.8,773.4 L1365.7,822.3 M1395.9,778.1 L1384.1,823.4 M1365.7,822.3 L1384.1,823.4 M1416.3,784.8 L1400.2,827.1 M1384.1,823.4 L1400.2,827.1 M1437.4,792.3 L1424.1,837.1 M1400.2,827.1 L1424.1,837.1 M1458.9,797.9 L1448.4,843.5 M1424.1,837.1 L1448.4,843.5 M1481.1,801.8 L1476.4,846.9 M1448.4,843.5 L1476.4,846.9 M1503.6,802.3 L1503.9,852.1 M1476.4,846.9 L1503.9,852.1 M1525.5,802.4 L1525.2,847.7 M1503.9,852.1 L1525.2,847.7 M1547.5,802.5 L1547.3,849.3 M1525.2,847.7 L1547.3,849.3 M1569.6,802.6 L1569.7,849.4 M1547.3,849.3 L1569.7,849.4 M1591.7,802.3 L1592.4,834.1 M1569.7,849.4 L1592.4,834.1 M1525.6,793.3 L1526.0,749.5 M1547.6,793.4 L1547.8,751.1 M1526.0,749.5 L1547.8,751.1 M1569.6,793.5 L1569.5,749.7 M1547.8,751.1 L1569.5,749.7 M1591.5,793.2 L1590.4,747.9 M1569.5,749.7 L1590.4,747.9 M1646.8,424.7 L1666.7,423.3 M1642.4,580.7 L1678.2,584.7 M1638.1,589.6 L1663.6,615.0 M1624.1,593.6 L1616.0,628.7 M1641.0,687.2 L1676.9,688.9 M1635.0,698.7 L1656.8,727.3 M1623.0,701.7 L1617.0,737.2 M1620.7,671.9 L1609.4,637.7 M1636.4,675.5 L1661.7,649.9 M1607.6,785.5 L1574.6,771.2 M1619.1,776.0 L1611.0,740.9 M1632.1,778.6 L1652.8,749.1 M1353.6,781.2 L1377.6,808.1 M1342.3,784.7 L1337.2,820.3 M1332.4,778.2 L1302.0,797.4 " fill="none" stroke="#ddc5a6" stroke-width="1.5" stroke-linecap="round" stroke-linejoin="round"/><circle cx="965.6" cy="601.2" r="16.4" fill="#e5e4e0" stroke="#ddc5a6" stroke-width="1.5"/><circle cx="1025.3" cy="696.5" r="13.5" fill="#e5e4e0" stroke="#ddc5a6" stroke-width="1.5"/><circle cx="1151.4" cy="310.2" r="17" fill="#e5e4e0" stroke="#ddc5a6" stroke-width="1.5"/><circle cx="1135" cy="416.3" r="17" fill="#e5e4e0" stroke="#ddc5a6" stroke-width="1.5"/><circle cx="1349.5" cy="416.3" r="15.4" fill="#e5e4e0" stroke="#ddc5a6" stroke-width="1.5"/><circle cx="1355.9" cy="522.1" r="16.4" fill="#e5e4e0" stroke="#ddc5a6" stroke-width="1.5"/><circle cx="1534.1" cy="489.4" r="16.4" fill="#e5e4e0" stroke="#ddc5a6" stroke-width="1.5"/><circle cx="1630.4" cy="425.9" r="16.4" fill="#e5e4e0" stroke="#ddc5a6" stroke-width="1.5"/><circle cx="1627.5" cy="579" r="15" fill="#e5e4e0" stroke="#ddc5a6" stroke-width="1.5"/><circle cx="1625.6" cy="686.5" r="15.4" fill="#e5e4e0" stroke="#ddc5a6" stroke-width="1.5"/><circle cx="1622.7" cy="792" r="16.4" fill="#e5e4e0" stroke="#ddc5a6" stroke-width="1.5"/><circle cx="1344.3" cy="770.8" r="14" fill="#e5e4e0" stroke="#ddc5a6" stroke-width="1.5"/><circle cx="1247.5" cy="493.3" r="21" fill="#e5e4e0" stroke="#ddc5a6" stroke-width="1.5"/><circle cx="1155.8" cy="528.9" r="20" fill="#e5e4e0" stroke="#ddc5a6" stroke-width="1.5"/><path d="M1689,912 h33 v12 h-33Z M1697,912 v12 M1706,912 v12 M1714,912 v12" fill="none" stroke="#ddc5a6" stroke-width="1.6"/><path d="M1729.6,912 h33 v12 h-33Z M1737.6,912 v12 M1746.6,912 v12 M1754.6,912 v12" fill="none" stroke="#ddc5a6" stroke-width="1.6"/><path d="M1766,912 h33 v12 h-33Z M1774,912 v12 M1783,912 v12 M1791,912 v12" fill="none" stroke="#ddc5a6" stroke-width="1.6"/><path d="M900.0,236.0 L1052.0,236.0" fill="none" stroke="#d6dbe8" stroke-width="13.1" stroke-linecap="round" stroke-linejoin="round"/><path d="M1086.0,231.5 C1093.3,232.1 1109.7,233.5 1130.0,235.0 C1150.3,236.5 1182.2,238.0 1208.0,240.3 C1233.8,242.6 1262.5,243.8 1285.0,248.6 C1307.5,253.3 1323.5,262.4 1342.8,268.8 C1362.0,275.2 1386.7,283.1 1400.5,287.1 C1414.3,291.1 1407.0,291.8 1425.6,292.9 C1444.2,294.0 1484.8,293.9 1512.0,293.9 C1539.2,293.9 1566.5,293.7 1589.0,292.9 C1611.5,292.1 1627.5,290.9 1646.8,289.0 C1666.0,287.1 1685.2,284.3 1704.5,281.3 C1723.8,278.3 1743.0,274.1 1762.3,270.8 C1781.5,267.5 1810.4,263.1 1820.0,261.5" fill="none" stroke="#d6dbe8" stroke-width="13.4" stroke-linecap="round" stroke-linejoin="round"/><path d="M1056.5,262.0 C1056.2,273.1 1053.6,306.0 1054.6,328.5 C1055.6,351.0 1058.6,369.5 1062.5,397.0 C1066.4,424.5 1073.5,462.6 1078.2,493.3 C1083.0,524.0 1086.0,550.3 1091.0,581.0 C1096.0,611.7 1103.3,646.6 1108.1,677.3 C1112.9,708.0 1115.5,735.0 1120.0,765.0 C1124.5,795.0 1130.3,827.2 1135.0,857.4 C1139.7,887.6 1145.5,928.6 1148.0,946.0 C1150.5,963.4 1149.7,959.3 1150.0,962.0" fill="none" stroke="#d6dbe8" stroke-width="16.400000000000002" stroke-linecap="round" stroke-linejoin="round"/><path d="M1428.4,210.0 L1428.4,292.0" fill="none" stroke="#d6dbe8" stroke-width="12.2" stroke-linecap="round" stroke-linejoin="round"/><path d="M900.0,432.9 L1061.9,420.1" fill="none" stroke="#d6dbe8" stroke-width="10.1" stroke-linecap="round" stroke-linejoin="round"/><path d="M1088.0,588.5 L965.6,601.2" fill="none" stroke="#d6dbe8" stroke-width="9.6" stroke-linecap="round" stroke-linejoin="round"/><path d="M956.0,620.5 L953.0,750.4" fill="none" stroke="#d6dbe8" stroke-width="7.199999999999999" stroke-linecap="round" stroke-linejoin="round"/><path d="M900.0,745.1 L1038.8,762.0 L1116.0,775.0" fill="none" stroke="#d6dbe8" stroke-width="10.1" stroke-linecap="round" stroke-linejoin="round"/><path d="M1025.3,698.0 L1022.4,759.0" fill="none" stroke="#d6dbe8" stroke-width="7.199999999999999" stroke-linecap="round" stroke-linejoin="round"/><path d="M1151.4,310.2 C1153.2,309.4 1158.1,306.8 1162.0,305.4 C1165.9,304.0 1167.3,302.6 1175.0,301.6 C1182.7,300.6 1197.5,299.5 1208.0,299.6 C1218.5,299.7 1228.4,300.7 1238.0,302.0 C1247.6,303.3 1254.8,304.8 1265.8,307.3 C1276.8,309.8 1291.5,313.1 1304.3,317.0 C1317.1,320.9 1330.6,324.8 1342.8,330.4 C1355.0,336.0 1372.6,344.6 1377.4,350.7 C1382.2,356.8 1374.3,359.3 1371.7,367.0 C1369.1,374.7 1365.7,388.8 1362.0,397.0 C1358.3,405.2 1351.6,413.1 1349.5,416.3" fill="none" stroke="#d6dbe8" stroke-width="7.6" stroke-linecap="round" stroke-linejoin="round"/><path d="M1263.8,307.3 C1263.2,310.8 1262.9,320.1 1260.0,328.5 C1257.1,336.9 1252.0,349.0 1246.5,357.4 C1241.0,365.8 1233.7,372.8 1227.3,378.6 C1220.9,384.4 1215.9,386.8 1208.0,392.0 C1200.1,397.2 1189.0,405.5 1180.0,410.0 C1171.0,414.5 1161.8,417.9 1154.3,419.0 C1146.8,420.1 1138.2,416.8 1135.0,416.3" fill="none" stroke="#d6dbe8" stroke-width="7.6" stroke-linecap="round" stroke-linejoin="round"/><path d="M1377.4,350.7 C1381.2,349.1 1393.1,343.2 1400.5,341.0 C1407.9,338.8 1417.3,338.0 1421.7,337.2 C1426.1,336.4 1426.1,336.2 1427.0,336.0" fill="none" stroke="#d6dbe8" stroke-width="7.6" stroke-linecap="round" stroke-linejoin="round"/><path d="M1425.6,296.0 C1425.5,301.7 1423.9,319.8 1425.0,330.0 C1426.1,340.2 1428.7,348.7 1432.0,357.0 C1435.3,365.3 1441.3,373.3 1445.0,380.0 C1448.7,386.7 1453.0,390.9 1454.4,397.0 C1455.8,403.1 1454.8,406.7 1453.5,416.3 C1452.2,425.9 1447.2,443.6 1446.7,454.8 C1446.2,466.0 1448.7,474.0 1450.6,483.6 C1452.5,493.2 1457.0,502.9 1458.3,512.5 C1459.6,522.1 1459.7,530.0 1458.3,541.4 C1456.9,552.8 1451.9,567.1 1450.0,581.0 C1448.1,594.9 1447.5,610.6 1447.0,625.0 C1446.5,639.4 1445.5,657.6 1446.7,667.6 C1447.9,677.6 1450.9,680.5 1454.4,685.0 C1457.9,689.5 1463.4,692.4 1467.9,694.6 C1472.4,696.8 1474.1,697.5 1481.4,698.4 C1488.8,699.3 1500.5,699.5 1512.0,700.0 C1523.5,700.5 1537.7,702.2 1550.5,701.3 C1563.3,700.4 1576.5,697.1 1589.0,694.6 C1601.5,692.1 1619.5,687.9 1625.6,686.5" fill="none" stroke="#d6dbe8" stroke-width="9.1" stroke-linecap="round" stroke-linejoin="round"/><path d="M1456.4,415.3 L1496.8,416.3" fill="none" stroke="#d6dbe8" stroke-width="5.6" stroke-linecap="round" stroke-linejoin="round"/><path d="M1459.0,512.5 C1464.2,512.3 1481.2,511.8 1490.0,511.5 C1498.8,511.2 1505.8,512.7 1512.0,510.6 C1518.2,508.5 1523.7,502.5 1527.4,499.0 C1531.1,495.5 1533.0,491.0 1534.1,489.4" fill="none" stroke="#d6dbe8" stroke-width="8.6" stroke-linecap="round" stroke-linejoin="round"/><path d="M1630.4,425.9 C1630.6,426.9 1630.6,424.0 1631.4,432.0 C1632.2,440.0 1634.7,457.4 1635.2,474.0 C1635.7,490.6 1635.6,517.3 1634.3,531.8 C1633.0,546.2 1629.9,554.3 1627.5,560.7 C1625.1,567.1 1624.6,566.4 1619.8,570.3 C1615.0,574.2 1602.1,581.6 1598.6,583.9" fill="none" stroke="#d6dbe8" stroke-width="8.6" stroke-linecap="round" stroke-linejoin="round"/><path d="M1448.7,590.6 C1453.5,590.8 1467.0,590.6 1477.5,591.6 C1488.0,592.6 1501.4,595.0 1512.0,596.4 C1522.6,597.8 1531.3,600.6 1540.9,600.3 C1550.5,600.0 1560.2,597.2 1569.8,594.5 C1579.4,591.8 1589.0,586.5 1598.6,583.9 C1608.2,581.3 1622.7,579.8 1627.5,579.0" fill="none" stroke="#d6dbe8" stroke-width="8.3" stroke-linecap="round" stroke-linejoin="round"/><path d="M1252.3,504.0 C1252.3,516.8 1252.3,558.5 1252.3,581.0 C1252.3,603.5 1253.6,625.3 1252.3,638.8 C1251.0,652.3 1248.4,655.2 1244.6,661.9 C1240.8,668.6 1230.5,672.8 1229.2,679.2 C1227.9,685.6 1234.3,691.1 1236.9,700.4 C1239.5,709.7 1242.8,724.2 1244.6,735.0 C1246.4,745.8 1246.7,750.4 1247.5,765.0 C1248.3,779.6 1249.2,807.4 1249.4,822.8 C1249.6,838.2 1248.6,851.6 1248.4,857.4" fill="none" stroke="#d6dbe8" stroke-width="8.3" stroke-linecap="round" stroke-linejoin="round"/><path d="M1152.4,539.5 C1149.5,546.4 1138.5,570.9 1135.0,581.0 C1131.5,591.1 1129.3,592.9 1131.2,600.3 C1133.1,607.7 1141.5,617.3 1146.6,625.3 C1151.7,633.3 1159.0,641.3 1162.0,648.4 C1165.0,655.5 1164.4,664.4 1164.9,667.6" fill="none" stroke="#d6dbe8" stroke-width="8.3" stroke-linecap="round" stroke-linejoin="round"/><path d="M1114.0,695.5 C1117.5,693.4 1126.7,687.0 1135.0,683.0 C1143.3,679.0 1151.7,673.4 1163.9,671.5 C1176.1,669.6 1197.1,670.2 1208.0,671.5 C1218.9,672.8 1225.7,677.9 1229.2,679.2" fill="none" stroke="#d6dbe8" stroke-width="7.1" stroke-linecap="round" stroke-linejoin="round"/><path d="M1355.7,524.0 C1355.6,533.5 1355.4,558.7 1355.3,581.0 C1355.2,603.3 1354.5,641.6 1355.3,658.0 C1356.1,674.4 1360.3,673.8 1360.1,679.2 C1359.9,684.7 1356.5,685.9 1354.3,690.7 C1352.0,695.5 1348.0,700.7 1346.6,708.1 C1345.2,715.5 1344.4,726.4 1345.7,735.0 C1347.0,743.6 1351.6,754.7 1354.3,760.0 C1357.0,765.3 1360.7,765.8 1362.0,767.0" fill="none" stroke="#d6dbe8" stroke-width="8.3" stroke-linecap="round" stroke-linejoin="round"/><path d="M1360.0,679.2 C1362.0,678.7 1361.7,676.9 1371.7,676.3 C1381.7,675.6 1408.6,676.1 1419.8,675.3 C1431.0,674.5 1434.5,672.8 1439.0,671.5 C1443.5,670.2 1445.2,668.2 1446.5,667.6" fill="none" stroke="#d6dbe8" stroke-width="8.3" stroke-linecap="round" stroke-linejoin="round"/><path d="M1344.3,770.8 C1347.2,770.2 1352.6,766.4 1362.0,767.0 C1371.4,767.6 1387.7,771.1 1400.5,774.6 C1413.3,778.1 1426.2,784.3 1439.0,788.0 C1451.8,791.7 1465.3,795.2 1477.5,796.8 C1489.7,798.4 1491.6,797.6 1512.0,797.7 C1532.4,797.8 1581.5,798.5 1600.0,797.5 C1618.5,796.5 1618.9,792.9 1622.7,792.0" fill="none" stroke="#d6dbe8" stroke-width="8.3" stroke-linecap="round" stroke-linejoin="round"/><rect x="1196" y="859.5" width="56" height="31.0" rx="9" fill="none" stroke="#d6dbe8" stroke-width="8.3"/><circle cx="965.6" cy="601.2" r="7.5" fill="#d6dbe8"/><circle cx="1025.3" cy="696.5" r="7.5" fill="#d6dbe8"/><circle cx="1151.4" cy="310.2" r="7.5" fill="#d6dbe8"/><circle cx="1135" cy="416.3" r="7.5" fill="#d6dbe8"/><circle cx="1349.5" cy="416.3" r="7.5" fill="#d6dbe8"/><circle cx="1355.9" cy="522.1" r="7.8" fill="#d6dbe8"/><circle cx="1534.1" cy="489.4" r="7.8" fill="#d6dbe8"/><circle cx="1630.4" cy="425.9" r="7.5" fill="#d6dbe8"/><circle cx="1627.5" cy="579" r="7.8" fill="#d6dbe8"/><circle cx="1625.6" cy="686.5" r="7.5" fill="#d6dbe8"/><circle cx="1622.7" cy="792" r="7.8" fill="#d6dbe8"/><circle cx="1344.3" cy="770.8" r="7.8" fill="#d6dbe8"/><circle cx="1247.5" cy="493.3" r="13.3" fill="#d6dbe8"/><circle cx="1155.8" cy="528.9" r="12.3" fill="#d6dbe8"/><circle cx="1068.6" cy="229.4" r="23.6" fill="#d6dbe8"/><path d="M1046.3,244 L1046.6,330 L1062.8,330 L1069.5,270 Q1074,250 1108,245.5 L1108,238 L1046.3,238Z" fill="#d6dbe8"/><path d="M972.3,262.7 L1033.4,262.7 L1033.4,325.4 L923.0,325.4 L911.7,338.0 L900.0,341.5" fill="none" stroke="#d6dbe8" stroke-width="5.2" stroke-linecap="round" stroke-linejoin="round"/><path d="M970.4,241.9 L970.4,325.2" fill="none" stroke="#d6dbe8" stroke-width="5.2" stroke-linecap="round" stroke-linejoin="round"/><path d="M989.3,262.7 L989.3,325.2" fill="none" stroke="#d6dbe8" stroke-width="5.2" stroke-linecap="round" stroke-linejoin="round"/><path d="M989.3,308.7 L1033.4,308.7" fill="none" stroke="#d6dbe8" stroke-width="5.2" stroke-linecap="round" stroke-linejoin="round"/><path d="M900.0,259.5 L911.7,257.3 L911.7,243.8" fill="none" stroke="#d6dbe8" stroke-width="4.7" stroke-linecap="round" stroke-linejoin="round"/><path d="M918.4,258.2 L924.2,260.2 L924.2,280.4" fill="none" stroke="#d6dbe8" stroke-width="4.7" stroke-linecap="round" stroke-linejoin="round"/><path d="M969.5,214.0 C970.1,215.3 971.6,219.3 973.0,222.0 C974.4,224.7 977.2,228.9 978.1,230.3" fill="none" stroke="#d6dbe8" stroke-width="4.2" stroke-linecap="round" stroke-linejoin="round"/><path d="M1219.6,213.0 L1220.5,224.5" fill="none" stroke="#d6dbe8" stroke-width="4.2" stroke-linecap="round" stroke-linejoin="round"/><path d="M1285.0,215.0 C1282.5,216.5 1274.2,221.2 1270.0,224.0 C1265.8,226.8 1261.7,230.7 1260.0,232.0" fill="none" stroke="#d6dbe8" stroke-width="4.7" stroke-linecap="round" stroke-linejoin="round"/><path d="M957.9,397.0 L959.8,422.0" fill="none" stroke="#d6dbe8" stroke-width="4.2" stroke-linecap="round" stroke-linejoin="round"/><path d="M975.2,545.2 C979.4,542.3 992.3,532.4 1000.3,527.9 C1008.3,523.4 1017.0,518.9 1023.4,518.3 C1029.8,517.6 1033.5,522.4 1038.8,524.0 C1044.1,525.6 1048.9,527.2 1055.0,528.0 C1061.1,528.8 1072.0,528.8 1075.4,528.9" fill="none" stroke="#d6dbe8" stroke-width="4.7" stroke-linecap="round" stroke-linejoin="round"/><path d="M1035.0,694.6 C1036.9,692.7 1044.1,686.9 1046.5,683.0 C1048.9,679.1 1048.1,674.4 1049.4,671.5 C1050.7,668.6 1053.4,666.7 1054.2,665.7" fill="none" stroke="#d6dbe8" stroke-width="4.7" stroke-linecap="round" stroke-linejoin="round"/><path d="M1026.3,735.0 C1028.4,734.0 1031.3,730.2 1038.8,729.2 C1046.3,728.2 1066.0,729.2 1071.5,729.2" fill="none" stroke="#d6dbe8" stroke-width="4.7" stroke-linecap="round" stroke-linejoin="round"/><path d="M1127.3,762.0 C1134.4,761.8 1161.7,761.8 1169.7,761.0 C1177.7,760.2 1174.5,757.8 1175.5,757.2" fill="none" stroke="#d6dbe8" stroke-width="5.2" stroke-linecap="round" stroke-linejoin="round"/><path d="M1091.7,773.7 C1091.2,776.1 1090.6,784.9 1088.8,788.1 C1087.0,791.3 1084.8,791.7 1081.0,793.0 C1077.2,794.3 1069.0,792.6 1065.7,795.8 C1062.4,799.0 1061.7,809.5 1060.9,812.2" fill="none" stroke="#d6dbe8" stroke-width="5.2" stroke-linecap="round" stroke-linejoin="round"/><path d="M1093.6,881.5 L1128.3,877.6" fill="none" stroke="#d6dbe8" stroke-width="5.2" stroke-linecap="round" stroke-linejoin="round"/><path d="M1513.0,312.0 C1524.1,311.1 1557.1,307.5 1579.4,306.4 C1601.7,305.3 1634.6,306.1 1646.8,305.4 C1659.0,304.7 1651.4,303.6 1652.5,302.0 C1653.6,300.4 1653.3,297.0 1653.5,296.0" fill="none" stroke="#d6dbe8" stroke-width="5.2" stroke-linecap="round" stroke-linejoin="round"/><path d="M1512.0,260.2 C1513.6,260.4 1518.9,259.7 1521.6,261.1 C1524.3,262.5 1527.1,264.6 1528.4,268.8 C1529.7,273.0 1529.2,283.3 1529.3,286.2" fill="none" stroke="#d6dbe8" stroke-width="4.2" stroke-linecap="round" stroke-linejoin="round"/><path d="M1630.4,244.8 L1637.1,281.3" fill="none" stroke="#d6dbe8" stroke-width="4.2" stroke-linecap="round" stroke-linejoin="round"/><path d="M1752.7,286.2 C1754.0,288.1 1755.6,293.8 1760.4,297.7 C1765.2,301.6 1771.6,307.1 1781.5,309.3 C1791.4,311.6 1813.6,310.9 1820.0,311.2" fill="none" stroke="#d6dbe8" stroke-width="4.7" stroke-linecap="round" stroke-linejoin="round"/><path d="M1764.2,286.2 C1765.2,287.5 1766.5,291.7 1770.0,293.9 C1773.5,296.1 1777.1,299.3 1785.4,299.6 C1793.7,299.9 1814.2,296.4 1820.0,295.8" fill="none" stroke="#d6dbe8" stroke-width="4.7" stroke-linecap="round" stroke-linejoin="round"/><path d="M1793.0,309.0 L1805.0,299.0" fill="none" stroke="#d6dbe8" stroke-width="4.7" stroke-linecap="round" stroke-linejoin="round"/><path d="M1785.4,213.0 L1785.4,227.4" fill="none" stroke="#d6dbe8" stroke-width="4.2" stroke-linecap="round" stroke-linejoin="round"/><path d="M1808.5,213.0 L1808.5,241.9 L1798.9,241.9" fill="none" stroke="#d6dbe8" stroke-width="4.2" stroke-linecap="round" stroke-linejoin="round"/><path d="M1754.6,259.2 L1754.6,268.0" fill="none" stroke="#d6dbe8" stroke-width="4.2" stroke-linecap="round" stroke-linejoin="round"/><path d="M1820.0,452.8 L1798.9,449.0 L1786.4,458.6 L1790.2,470.2 L1800.8,475.0 L1820.0,475.0" fill="none" stroke="#d6dbe8" stroke-width="4.2" stroke-linecap="round" stroke-linejoin="round"/><path d="M1409.2,921.0 L1409.2,950.0" fill="none" stroke="#d6dbe8" stroke-width="7.2" stroke-linecap="round" stroke-linejoin="round"/><path d="M1693.0,931.0 L1820.0,931.0" fill="none" stroke="#d6dbe8" stroke-width="8.2" stroke-linecap="round" stroke-linejoin="round"/><path d="M1208.0,893.0 L1246.5,885.6" fill="none" stroke="#d6dbe8" stroke-width="5.7" stroke-linecap="round" stroke-linejoin="round"/><path d="M1029.0,944.0 L1031.0,950.0" fill="none" stroke="#d6dbe8" stroke-width="5.2" stroke-linecap="round" stroke-linejoin="round"/><path d="M972.3,262.7 L1033.4,262.7 L1033.4,325.4 L923.0,325.4 L911.7,338.0 L900.0,341.5" fill="none" stroke="#fff" stroke-width="4" stroke-linecap="round" stroke-linejoin="round"/><path d="M970.4,241.9 L970.4,325.2" fill="none" stroke="#fff" stroke-width="4" stroke-linecap="round" stroke-linejoin="round"/><path d="M989.3,262.7 L989.3,325.2" fill="none" stroke="#fff" stroke-width="4" stroke-linecap="round" stroke-linejoin="round"/><path d="M989.3,308.7 L1033.4,308.7" fill="none" stroke="#fff" stroke-width="4" stroke-linecap="round" stroke-linejoin="round"/><path d="M900.0,259.5 L911.7,257.3 L911.7,243.8" fill="none" stroke="#fff" stroke-width="3.5" stroke-linecap="round" stroke-linejoin="round"/><path d="M918.4,258.2 L924.2,260.2 L924.2,280.4" fill="none" stroke="#fff" stroke-width="3.5" stroke-linecap="round" stroke-linejoin="round"/><path d="M969.5,214.0 C970.1,215.3 971.6,219.3 973.0,222.0 C974.4,224.7 977.2,228.9 978.1,230.3" fill="none" stroke="#fff" stroke-width="3" stroke-linecap="round" stroke-linejoin="round"/><path d="M1219.6,213.0 L1220.5,224.5" fill="none" stroke="#fff" stroke-width="3" stroke-linecap="round" stroke-linejoin="round"/><path d="M1285.0,215.0 C1282.5,216.5 1274.2,221.2 1270.0,224.0 C1265.8,226.8 1261.7,230.7 1260.0,232.0" fill="none" stroke="#fff" stroke-width="3.5" stroke-linecap="round" stroke-linejoin="round"/><path d="M957.9,397.0 L959.8,422.0" fill="none" stroke="#fff" stroke-width="3" stroke-linecap="round" stroke-linejoin="round"/><path d="M975.2,545.2 C979.4,542.3 992.3,532.4 1000.3,527.9 C1008.3,523.4 1017.0,518.9 1023.4,518.3 C1029.8,517.6 1033.5,522.4 1038.8,524.0 C1044.1,525.6 1048.9,527.2 1055.0,528.0 C1061.1,528.8 1072.0,528.8 1075.4,528.9" fill="none" stroke="#fff" stroke-width="3.5" stroke-linecap="round" stroke-linejoin="round"/><path d="M1035.0,694.6 C1036.9,692.7 1044.1,686.9 1046.5,683.0 C1048.9,679.1 1048.1,674.4 1049.4,671.5 C1050.7,668.6 1053.4,666.7 1054.2,665.7" fill="none" stroke="#fff" stroke-width="3.5" stroke-linecap="round" stroke-linejoin="round"/><path d="M1026.3,735.0 C1028.4,734.0 1031.3,730.2 1038.8,729.2 C1046.3,728.2 1066.0,729.2 1071.5,729.2" fill="none" stroke="#fff" stroke-width="3.5" stroke-linecap="round" stroke-linejoin="round"/><path d="M1127.3,762.0 C1134.4,761.8 1161.7,761.8 1169.7,761.0 C1177.7,760.2 1174.5,757.8 1175.5,757.2" fill="none" stroke="#fff" stroke-width="4" stroke-linecap="round" stroke-linejoin="round"/><path d="M1091.7,773.7 C1091.2,776.1 1090.6,784.9 1088.8,788.1 C1087.0,791.3 1084.8,791.7 1081.0,793.0 C1077.2,794.3 1069.0,792.6 1065.7,795.8 C1062.4,799.0 1061.7,809.5 1060.9,812.2" fill="none" stroke="#fff" stroke-width="4" stroke-linecap="round" stroke-linejoin="round"/><path d="M1093.6,881.5 L1128.3,877.6" fill="none" stroke="#fff" stroke-width="4" stroke-linecap="round" stroke-linejoin="round"/><path d="M1513.0,312.0 C1524.1,311.1 1557.1,307.5 1579.4,306.4 C1601.7,305.3 1634.6,306.1 1646.8,305.4 C1659.0,304.7 1651.4,303.6 1652.5,302.0 C1653.6,300.4 1653.3,297.0 1653.5,296.0" fill="none" stroke="#fff" stroke-width="4" stroke-linecap="round" stroke-linejoin="round"/><path d="M1512.0,260.2 C1513.6,260.4 1518.9,259.7 1521.6,261.1 C1524.3,262.5 1527.1,264.6 1528.4,268.8 C1529.7,273.0 1529.2,283.3 1529.3,286.2" fill="none" stroke="#fff" stroke-width="3" stroke-linecap="round" stroke-linejoin="round"/><path d="M1630.4,244.8 L1637.1,281.3" fill="none" stroke="#fff" stroke-width="3" stroke-linecap="round" stroke-linejoin="round"/><path d="M1752.7,286.2 C1754.0,288.1 1755.6,293.8 1760.4,297.7 C1765.2,301.6 1771.6,307.1 1781.5,309.3 C1791.4,311.6 1813.6,310.9 1820.0,311.2" fill="none" stroke="#fff" stroke-width="3.5" stroke-linecap="round" stroke-linejoin="round"/><path d="M1764.2,286.2 C1765.2,287.5 1766.5,291.7 1770.0,293.9 C1773.5,296.1 1777.1,299.3 1785.4,299.6 C1793.7,299.9 1814.2,296.4 1820.0,295.8" fill="none" stroke="#fff" stroke-width="3.5" stroke-linecap="round" stroke-linejoin="round"/><path d="M1793.0,309.0 L1805.0,299.0" fill="none" stroke="#fff" stroke-width="3.5" stroke-linecap="round" stroke-linejoin="round"/><path d="M1785.4,213.0 L1785.4,227.4" fill="none" stroke="#fff" stroke-width="3" stroke-linecap="round" stroke-linejoin="round"/><path d="M1808.5,213.0 L1808.5,241.9 L1798.9,241.9" fill="none" stroke="#fff" stroke-width="3" stroke-linecap="round" stroke-linejoin="round"/><path d="M1754.6,259.2 L1754.6,268.0" fill="none" stroke="#fff" stroke-width="3" stroke-linecap="round" stroke-linejoin="round"/><path d="M1820.0,452.8 L1798.9,449.0 L1786.4,458.6 L1790.2,470.2 L1800.8,475.0 L1820.0,475.0" fill="none" stroke="#fff" stroke-width="3" stroke-linecap="round" stroke-linejoin="round"/><path d="M1409.2,921.0 L1409.2,950.0" fill="none" stroke="#fff" stroke-width="6" stroke-linecap="round" stroke-linejoin="round"/><path d="M1693.0,931.0 L1820.0,931.0" fill="none" stroke="#fff" stroke-width="7" stroke-linecap="round" stroke-linejoin="round"/><path d="M1208.0,893.0 L1246.5,885.6" fill="none" stroke="#fff" stroke-width="4.5" stroke-linecap="round" stroke-linejoin="round"/><path d="M1029.0,944.0 L1031.0,950.0" fill="none" stroke="#fff" stroke-width="4" stroke-linecap="round" stroke-linejoin="round"/><path d="M900.0,236.0 L1052.0,236.0" fill="none" stroke="#fff" stroke-width="11.5" stroke-linecap="round" stroke-linejoin="round"/><path d="M1086.0,231.5 C1093.3,232.1 1109.7,233.5 1130.0,235.0 C1150.3,236.5 1182.2,238.0 1208.0,240.3 C1233.8,242.6 1262.5,243.8 1285.0,248.6 C1307.5,253.3 1323.5,262.4 1342.8,268.8 C1362.0,275.2 1386.7,283.1 1400.5,287.1 C1414.3,291.1 1407.0,291.8 1425.6,292.9 C1444.2,294.0 1484.8,293.9 1512.0,293.9 C1539.2,293.9 1566.5,293.7 1589.0,292.9 C1611.5,292.1 1627.5,290.9 1646.8,289.0 C1666.0,287.1 1685.2,284.3 1704.5,281.3 C1723.8,278.3 1743.0,274.1 1762.3,270.8 C1781.5,267.5 1810.4,263.1 1820.0,261.5" fill="none" stroke="#fff" stroke-width="11.8" stroke-linecap="round" stroke-linejoin="round"/><path d="M1056.5,262.0 C1056.2,273.1 1053.6,306.0 1054.6,328.5 C1055.6,351.0 1058.6,369.5 1062.5,397.0 C1066.4,424.5 1073.5,462.6 1078.2,493.3 C1083.0,524.0 1086.0,550.3 1091.0,581.0 C1096.0,611.7 1103.3,646.6 1108.1,677.3 C1112.9,708.0 1115.5,735.0 1120.0,765.0 C1124.5,795.0 1130.3,827.2 1135.0,857.4 C1139.7,887.6 1145.5,928.6 1148.0,946.0 C1150.5,963.4 1149.7,959.3 1150.0,962.0" fill="none" stroke="#fff" stroke-width="14.8" stroke-linecap="round" stroke-linejoin="round"/><path d="M1428.4,210.0 L1428.4,292.0" fill="none" stroke="#fff" stroke-width="10.6" stroke-linecap="round" stroke-linejoin="round"/><path d="M900.0,432.9 L1061.9,420.1" fill="none" stroke="#fff" stroke-width="8.5" stroke-linecap="round" stroke-linejoin="round"/><path d="M1088.0,588.5 L965.6,601.2" fill="none" stroke="#fff" stroke-width="8" stroke-linecap="round" stroke-linejoin="round"/><path d="M956.0,620.5 L953.0,750.4" fill="none" stroke="#fff" stroke-width="5.6" stroke-linecap="round" stroke-linejoin="round"/><path d="M900.0,745.1 L1038.8,762.0 L1116.0,775.0" fill="none" stroke="#fff" stroke-width="8.5" stroke-linecap="round" stroke-linejoin="round"/><path d="M1025.3,698.0 L1022.4,759.0" fill="none" stroke="#fff" stroke-width="5.6" stroke-linecap="round" stroke-linejoin="round"/><path d="M1151.4,310.2 C1153.2,309.4 1158.1,306.8 1162.0,305.4 C1165.9,304.0 1167.3,302.6 1175.0,301.6 C1182.7,300.6 1197.5,299.5 1208.0,299.6 C1218.5,299.7 1228.4,300.7 1238.0,302.0 C1247.6,303.3 1254.8,304.8 1265.8,307.3 C1276.8,309.8 1291.5,313.1 1304.3,317.0 C1317.1,320.9 1330.6,324.8 1342.8,330.4 C1355.0,336.0 1372.6,344.6 1377.4,350.7 C1382.2,356.8 1374.3,359.3 1371.7,367.0 C1369.1,374.7 1365.7,388.8 1362.0,397.0 C1358.3,405.2 1351.6,413.1 1349.5,416.3" fill="none" stroke="#fff" stroke-width="6" stroke-linecap="round" stroke-linejoin="round"/><path d="M1263.8,307.3 C1263.2,310.8 1262.9,320.1 1260.0,328.5 C1257.1,336.9 1252.0,349.0 1246.5,357.4 C1241.0,365.8 1233.7,372.8 1227.3,378.6 C1220.9,384.4 1215.9,386.8 1208.0,392.0 C1200.1,397.2 1189.0,405.5 1180.0,410.0 C1171.0,414.5 1161.8,417.9 1154.3,419.0 C1146.8,420.1 1138.2,416.8 1135.0,416.3" fill="none" stroke="#fff" stroke-width="6" stroke-linecap="round" stroke-linejoin="round"/><path d="M1377.4,350.7 C1381.2,349.1 1393.1,343.2 1400.5,341.0 C1407.9,338.8 1417.3,338.0 1421.7,337.2 C1426.1,336.4 1426.1,336.2 1427.0,336.0" fill="none" stroke="#fff" stroke-width="6" stroke-linecap="round" stroke-linejoin="round"/><path d="M1425.6,296.0 C1425.5,301.7 1423.9,319.8 1425.0,330.0 C1426.1,340.2 1428.7,348.7 1432.0,357.0 C1435.3,365.3 1441.3,373.3 1445.0,380.0 C1448.7,386.7 1453.0,390.9 1454.4,397.0 C1455.8,403.1 1454.8,406.7 1453.5,416.3 C1452.2,425.9 1447.2,443.6 1446.7,454.8 C1446.2,466.0 1448.7,474.0 1450.6,483.6 C1452.5,493.2 1457.0,502.9 1458.3,512.5 C1459.6,522.1 1459.7,530.0 1458.3,541.4 C1456.9,552.8 1451.9,567.1 1450.0,581.0 C1448.1,594.9 1447.5,610.6 1447.0,625.0 C1446.5,639.4 1445.5,657.6 1446.7,667.6 C1447.9,677.6 1450.9,680.5 1454.4,685.0 C1457.9,689.5 1463.4,692.4 1467.9,694.6 C1472.4,696.8 1474.1,697.5 1481.4,698.4 C1488.8,699.3 1500.5,699.5 1512.0,700.0 C1523.5,700.5 1537.7,702.2 1550.5,701.3 C1563.3,700.4 1576.5,697.1 1589.0,694.6 C1601.5,692.1 1619.5,687.9 1625.6,686.5" fill="none" stroke="#fff" stroke-width="7.5" stroke-linecap="round" stroke-linejoin="round"/><path d="M1456.4,415.3 L1496.8,416.3" fill="none" stroke="#fff" stroke-width="4" stroke-linecap="round" stroke-linejoin="round"/><path d="M1459.0,512.5 C1464.2,512.3 1481.2,511.8 1490.0,511.5 C1498.8,511.2 1505.8,512.7 1512.0,510.6 C1518.2,508.5 1523.7,502.5 1527.4,499.0 C1531.1,495.5 1533.0,491.0 1534.1,489.4" fill="none" stroke="#fff" stroke-width="7" stroke-linecap="round" stroke-linejoin="round"/><path d="M1630.4,425.9 C1630.6,426.9 1630.6,424.0 1631.4,432.0 C1632.2,440.0 1634.7,457.4 1635.2,474.0 C1635.7,490.6 1635.6,517.3 1634.3,531.8 C1633.0,546.2 1629.9,554.3 1627.5,560.7 C1625.1,567.1 1624.6,566.4 1619.8,570.3 C1615.0,574.2 1602.1,581.6 1598.6,583.9" fill="none" stroke="#fff" stroke-width="7" stroke-linecap="round" stroke-linejoin="round"/><path d="M1448.7,590.6 C1453.5,590.8 1467.0,590.6 1477.5,591.6 C1488.0,592.6 1501.4,595.0 1512.0,596.4 C1522.6,597.8 1531.3,600.6 1540.9,600.3 C1550.5,600.0 1560.2,597.2 1569.8,594.5 C1579.4,591.8 1589.0,586.5 1598.6,583.9 C1608.2,581.3 1622.7,579.8 1627.5,579.0" fill="none" stroke="#fff" stroke-width="6.7" stroke-linecap="round" stroke-linejoin="round"/><path d="M1252.3,504.0 C1252.3,516.8 1252.3,558.5 1252.3,581.0 C1252.3,603.5 1253.6,625.3 1252.3,638.8 C1251.0,652.3 1248.4,655.2 1244.6,661.9 C1240.8,668.6 1230.5,672.8 1229.2,679.2 C1227.9,685.6 1234.3,691.1 1236.9,700.4 C1239.5,709.7 1242.8,724.2 1244.6,735.0 C1246.4,745.8 1246.7,750.4 1247.5,765.0 C1248.3,779.6 1249.2,807.4 1249.4,822.8 C1249.6,838.2 1248.6,851.6 1248.4,857.4" fill="none" stroke="#fff" stroke-width="6.7" stroke-linecap="round" stroke-linejoin="round"/><path d="M1152.4,539.5 C1149.5,546.4 1138.5,570.9 1135.0,581.0 C1131.5,591.1 1129.3,592.9 1131.2,600.3 C1133.1,607.7 1141.5,617.3 1146.6,625.3 C1151.7,633.3 1159.0,641.3 1162.0,648.4 C1165.0,655.5 1164.4,664.4 1164.9,667.6" fill="none" stroke="#fff" stroke-width="6.7" stroke-linecap="round" stroke-linejoin="round"/><path d="M1114.0,695.5 C1117.5,693.4 1126.7,687.0 1135.0,683.0 C1143.3,679.0 1151.7,673.4 1163.9,671.5 C1176.1,669.6 1197.1,670.2 1208.0,671.5 C1218.9,672.8 1225.7,677.9 1229.2,679.2" fill="none" stroke="#fff" stroke-width="5.5" stroke-linecap="round" stroke-linejoin="round"/><path d="M1355.7,524.0 C1355.6,533.5 1355.4,558.7 1355.3,581.0 C1355.2,603.3 1354.5,641.6 1355.3,658.0 C1356.1,674.4 1360.3,673.8 1360.1,679.2 C1359.9,684.7 1356.5,685.9 1354.3,690.7 C1352.0,695.5 1348.0,700.7 1346.6,708.1 C1345.2,715.5 1344.4,726.4 1345.7,735.0 C1347.0,743.6 1351.6,754.7 1354.3,760.0 C1357.0,765.3 1360.7,765.8 1362.0,767.0" fill="none" stroke="#fff" stroke-width="6.7" stroke-linecap="round" stroke-linejoin="round"/><path d="M1360.0,679.2 C1362.0,678.7 1361.7,676.9 1371.7,676.3 C1381.7,675.6 1408.6,676.1 1419.8,675.3 C1431.0,674.5 1434.5,672.8 1439.0,671.5 C1443.5,670.2 1445.2,668.2 1446.5,667.6" fill="none" stroke="#fff" stroke-width="6.7" stroke-linecap="round" stroke-linejoin="round"/><path d="M1344.3,770.8 C1347.2,770.2 1352.6,766.4 1362.0,767.0 C1371.4,767.6 1387.7,771.1 1400.5,774.6 C1413.3,778.1 1426.2,784.3 1439.0,788.0 C1451.8,791.7 1465.3,795.2 1477.5,796.8 C1489.7,798.4 1491.6,797.6 1512.0,797.7 C1532.4,797.8 1581.5,798.5 1600.0,797.5 C1618.5,796.5 1618.9,792.9 1622.7,792.0" fill="none" stroke="#fff" stroke-width="6.7" stroke-linecap="round" stroke-linejoin="round"/><rect x="1196" y="859.5" width="56" height="31.0" rx="9" fill="none" stroke="#fff" stroke-width="6.7"/><circle cx="965.6" cy="601.2" r="6.7" fill="#fff"/><circle cx="1025.3" cy="696.5" r="6.7" fill="#fff"/><circle cx="1151.4" cy="310.2" r="6.7" fill="#fff"/><circle cx="1135" cy="416.3" r="6.7" fill="#fff"/><circle cx="1349.5" cy="416.3" r="6.7" fill="#fff"/><circle cx="1355.9" cy="522.1" r="7" fill="#fff"/><circle cx="1534.1" cy="489.4" r="7" fill="#fff"/><circle cx="1630.4" cy="425.9" r="6.7" fill="#fff"/><circle cx="1627.5" cy="579" r="7" fill="#fff"/><circle cx="1625.6" cy="686.5" r="6.7" fill="#fff"/><circle cx="1622.7" cy="792" r="7" fill="#fff"/><circle cx="1344.3" cy="770.8" r="7" fill="#fff"/><circle cx="1247.5" cy="493.3" r="12.5" fill="#fff"/><circle cx="1247.5" cy="493.3" r="6.4" fill="#e5e4e0" stroke="#d6dbe8" stroke-width="0.8"/><circle cx="1155.8" cy="528.9" r="11.5" fill="#fff"/><circle cx="1155.8" cy="528.9" r="5.8" fill="#e5e4e0" stroke="#d6dbe8" stroke-width="0.8"/><circle cx="1068.6" cy="229.4" r="22.8" fill="#fff"/><path d="M1047.1,244 L1047.4,330 L1062,330 L1068.7,270 Q1073,249.5 1108,244.6 L1108,238 L1047.1,238Z" fill="#fff"/><circle cx="1068.6" cy="229.4" r="11.5" fill="#e5e4e0" stroke="#d6dbe8" stroke-width="1"/><defs><path id="pov" d="M1448.7,590.6 C1453.5,590.8 1467.0,590.6 1477.5,591.6 C1488.0,592.6 1501.4,595.0 1512.0,596.4 C1522.6,597.8 1531.3,600.6 1540.9,600.3 C1550.5,600.0 1560.2,597.2 1569.8,594.5 C1579.4,591.8 1589.0,586.5 1598.6,583.9 C1608.2,581.3 1622.7,579.8 1627.5,579.0"/><path id="phk" d="M1114.0,695.5 C1117.5,693.4 1126.7,687.0 1135.0,683.0 C1143.3,679.0 1151.7,673.4 1163.9,671.5 C1176.1,669.6 1197.1,670.2 1208.0,671.5 C1218.9,672.8 1225.7,677.9 1229.2,679.2"/></defs><text x="1190" y="241.9" transform="rotate(3.5 1190 238.3)" text-anchor="middle" textLength="60" lengthAdjust="spacing" font-family="Liberation Sans, sans-serif" font-size="10.1" fill="#fff" stroke="#fff" stroke-width="2.4" stroke-linejoin="round">Hembree Rd</text><text x="1190" y="241.9" transform="rotate(3.5 1190 238.3)" text-anchor="middle" textLength="60" lengthAdjust="spacing" font-family="Liberation Sans, sans-serif" font-size="10.1" fill="#333" stroke="#333" stroke-width="0.25">Hembree Rd</text><text x="1533" y="297.4" transform="rotate(-1 1533 293.8)" text-anchor="middle" textLength="60" lengthAdjust="spacing" font-family="Liberation Sans, sans-serif" font-size="10.1" fill="#fff" stroke="#fff" stroke-width="2.4" stroke-linejoin="round">Hembree Rd</text><text x="1533" y="297.4" transform="rotate(-1 1533 293.8)" text-anchor="middle" textLength="60" lengthAdjust="spacing" font-family="Liberation Sans, sans-serif" font-size="10.1" fill="#333" stroke="#333" stroke-width="0.25">Hembree Rd</text><text x="1760" y="274.4" transform="rotate(-11 1760 270.8)" text-anchor="middle" textLength="60" lengthAdjust="spacing" font-family="Liberation Sans, sans-serif" font-size="10.1" fill="#fff" stroke="#fff" stroke-width="2.4" stroke-linejoin="round">Hembree Rd</text><text x="1760" y="274.4" transform="rotate(-11 1760 270.8)" text-anchor="middle" textLength="60" lengthAdjust="spacing" font-family="Liberation Sans, sans-serif" font-size="10.1" fill="#333" stroke="#333" stroke-width="0.25">Hembree Rd</text><text x="1332.5" y="329.4" transform="rotate(24 1332.5 325.8)" text-anchor="middle" textLength="53.5" lengthAdjust="spacing" font-family="Liberation Sans, sans-serif" font-size="10.1" fill="#fff" stroke="#fff" stroke-width="2.4" stroke-linejoin="round">Bluff Oak Dr</text><text x="1332.5" y="329.4" transform="rotate(24 1332.5 325.8)" text-anchor="middle" textLength="53.5" lengthAdjust="spacing" font-family="Liberation Sans, sans-serif" font-size="10.1" fill="#333" stroke="#333" stroke-width="0.25">Bluff Oak Dr</text><text x="1247.5" y="360.0" transform="rotate(-52 1247.5 356.4)" text-anchor="middle" textLength="52.6" lengthAdjust="spacing" font-family="Liberation Sans, sans-serif" font-size="10.1" fill="#fff" stroke="#fff" stroke-width="2.4" stroke-linejoin="round">Bluff Oak Ct</text><text x="1247.5" y="360.0" transform="rotate(-52 1247.5 356.4)" text-anchor="middle" textLength="52.6" lengthAdjust="spacing" font-family="Liberation Sans, sans-serif" font-size="10.1" fill="#333" stroke="#333" stroke-width="0.25">Bluff Oak Ct</text><text x="1438.5" y="363.1" transform="rotate(67 1438.5 359.5)" text-anchor="middle" textLength="75.5" lengthAdjust="spacing" font-family="Liberation Sans, sans-serif" font-size="10.1" fill="#fff" stroke="#fff" stroke-width="2.4" stroke-linejoin="round">Hembree Grove Dr</text><text x="1438.5" y="363.1" transform="rotate(67 1438.5 359.5)" text-anchor="middle" textLength="75.5" lengthAdjust="spacing" font-family="Liberation Sans, sans-serif" font-size="10.1" fill="#333" stroke="#333" stroke-width="0.25">Hembree Grove Dr</text><text x="1002.5" y="427.8" transform="rotate(-4.5 1002.5 424.2)" text-anchor="middle" textLength="66.4" lengthAdjust="spacing" font-family="Liberation Sans, sans-serif" font-size="10.1" fill="#fff" stroke="#fff" stroke-width="2.4" stroke-linejoin="round">Derby Forest Ct</text><text x="1002.5" y="427.8" transform="rotate(-4.5 1002.5 424.2)" text-anchor="middle" textLength="66.4" lengthAdjust="spacing" font-family="Liberation Sans, sans-serif" font-size="10.1" fill="#333" stroke="#333" stroke-width="0.25">Derby Forest Ct</text><text x="1450" y="584.6" transform="rotate(-87 1450 581)" text-anchor="middle" textLength="77" lengthAdjust="spacing" font-family="Liberation Sans, sans-serif" font-size="10.1" fill="#fff" stroke="#fff" stroke-width="2.4" stroke-linejoin="round">Hembree Grove Dr</text><text x="1450" y="584.6" transform="rotate(-87 1450 581)" text-anchor="middle" textLength="77" lengthAdjust="spacing" font-family="Liberation Sans, sans-serif" font-size="10.1" fill="#333" stroke="#333" stroke-width="0.25">Hembree Grove Dr</text><text x="1523" y="702.9" transform="rotate(0.5 1523 699.3)" text-anchor="middle" textLength="79" lengthAdjust="spacing" font-family="Liberation Sans, sans-serif" font-size="10.1" fill="#fff" stroke="#fff" stroke-width="2.4" stroke-linejoin="round">Hembree Grove Dr</text><text x="1523" y="702.9" transform="rotate(0.5 1523 699.3)" text-anchor="middle" textLength="79" lengthAdjust="spacing" font-family="Liberation Sans, sans-serif" font-size="10.1" fill="#333" stroke="#333" stroke-width="0.25">Hembree Grove Dr</text><text x="1349.5" y="733.8" transform="rotate(83.7 1349.5 730.2)" text-anchor="middle" textLength="52" lengthAdjust="spacing" font-family="Liberation Sans, sans-serif" font-size="10.1" fill="#fff" stroke="#fff" stroke-width="2.4" stroke-linejoin="round">Windwalk Dr</text><text x="1349.5" y="733.8" transform="rotate(83.7 1349.5 730.2)" text-anchor="middle" textLength="52" lengthAdjust="spacing" font-family="Liberation Sans, sans-serif" font-size="10.1" fill="#333" stroke="#333" stroke-width="0.25">Windwalk Dr</text><text x="1531" y="801.2" transform="rotate(0 1531 797.6)" text-anchor="middle" textLength="55" lengthAdjust="spacing" font-family="Liberation Sans, sans-serif" font-size="10.1" fill="#fff" stroke="#fff" stroke-width="2.4" stroke-linejoin="round">Windwalk Dr</text><text x="1531" y="801.2" transform="rotate(0 1531 797.6)" text-anchor="middle" textLength="55" lengthAdjust="spacing" font-family="Liberation Sans, sans-serif" font-size="10.1" fill="#333" stroke="#333" stroke-width="0.25">Windwalk Dr</text><text x="1066" y="771.9" transform="rotate(8 1066 768.3)" text-anchor="middle" textLength="57" lengthAdjust="spacing" font-family="Liberation Sans, sans-serif" font-size="10.1" fill="#fff" stroke="#fff" stroke-width="2.4" stroke-linejoin="round">Hollyberry Dr</text><text x="1066" y="771.9" transform="rotate(8 1066 768.3)" text-anchor="middle" textLength="57" lengthAdjust="spacing" font-family="Liberation Sans, sans-serif" font-size="10.1" fill="#333" stroke="#333" stroke-width="0.25">Hollyberry Dr</text><text x="1122.9" y="793.1" transform="rotate(78.7 1122.9 789.5)" text-anchor="middle" textLength="44" lengthAdjust="spacing" font-family="Liberation Sans, sans-serif" font-size="10.1" fill="#fff" stroke="#fff" stroke-width="2.4" stroke-linejoin="round">Houze Rd</text><text x="1122.9" y="793.1" transform="rotate(78.7 1122.9 789.5)" text-anchor="middle" textLength="44" lengthAdjust="spacing" font-family="Liberation Sans, sans-serif" font-size="10.1" fill="#333" stroke="#333" stroke-width="0.25">Houze Rd</text><text font-family="Liberation Sans, sans-serif" font-size="10.1" fill="#fff" stroke="#fff" stroke-width="2.4" stroke-linejoin="round" dy="3.6"><textPath href="#pov" startOffset="34" textLength="106" lengthAdjust="spacing">Hembree Grove Overlook</textPath></text><text font-family="Liberation Sans, sans-serif" font-size="10.1" fill="#333" stroke="#333" stroke-width="0.25" dy="3.6"><textPath href="#pov" startOffset="34" textLength="106" lengthAdjust="spacing">Hembree Grove Overlook</textPath></text><text font-family="Liberation Sans, sans-serif" font-size="10.1" fill="#fff" stroke="#fff" stroke-width="2.4" stroke-linejoin="round" dy="3.6"><textPath href="#phk" startOffset="26" textLength="79" lengthAdjust="spacing">Hawkins Cove Trail</textPath></text><text font-family="Liberation Sans, sans-serif" font-size="10.1" fill="#333" stroke="#333" stroke-width="0.25" dy="3.6"><textPath href="#phk" startOffset="26" textLength="79" lengthAdjust="spacing">Hawkins Cove Trail</textPath></text><text x="1773" y="935.9" transform="rotate(0 1773 932.3)" text-anchor="middle" textLength="47" lengthAdjust="spacing" font-family="Liberation Sans, sans-serif" font-size="10.1" fill="#fff" stroke="#fff" stroke-width="2.4" stroke-linejoin="round">Bombay Ln</text><text x="1773" y="935.9" transform="rotate(0 1773 932.3)" text-anchor="middle" textLength="47" lengthAdjust="spacing" font-family="Liberation Sans, sans-serif" font-size="10.1" fill="#9a9a9a" stroke="#9a9a9a" stroke-width="0.25">Bombay Ln</text><rect x="1063.8000000000002" y="240.8" width="19.2" height="14.4" rx="7" fill="#fff" stroke="#2e2e2e" stroke-width="1.2"/><text x="1073.4" y="251.1" text-anchor="middle" font-family="Liberation Sans, sans-serif" font-size="8.6" font-weight="700" fill="#2e2e2e" textLength="12.6" lengthAdjust="spacingAndGlyphs">140</text><rect x="1049.4" y="368.1" width="19.2" height="14.4" rx="7" fill="#fff" stroke="#2e2e2e" stroke-width="1.2"/><text x="1059" y="378.40000000000003" text-anchor="middle" font-family="Liberation Sans, sans-serif" font-size="8.6" font-weight="700" fill="#2e2e2e" textLength="12.6" lengthAdjust="spacingAndGlyphs">140</text><rect x="1077.9" y="547.6999999999999" width="19.2" height="14.4" rx="7" fill="#fff" stroke="#2e2e2e" stroke-width="1.2"/><text x="1087.5" y="558.0" text-anchor="middle" font-family="Liberation Sans, sans-serif" font-size="8.6" font-weight="700" fill="#2e2e2e" textLength="12.6" lengthAdjust="spacingAndGlyphs">140</text><rect x="1096.9" y="669.5" width="19.2" height="14.4" rx="7" fill="#fff" stroke="#2e2e2e" stroke-width="1.2"/><text x="1106.5" y="679.8000000000001" text-anchor="middle" font-family="Liberation Sans, sans-serif" font-size="8.6" font-weight="700" fill="#2e2e2e" textLength="12.6" lengthAdjust="spacingAndGlyphs">140</text><rect x="1124.4" y="849.8" width="19.2" height="14.4" rx="7" fill="#fff" stroke="#2e2e2e" stroke-width="1.2"/><text x="1134" y="860.1" text-anchor="middle" font-family="Liberation Sans, sans-serif" font-size="8.6" font-weight="700" fill="#2e2e2e" textLength="12.6" lengthAdjust="spacingAndGlyphs">140</text><circle cx="1259.6" cy="270.8" r="6" fill="#67773f" stroke="#fff" stroke-width="1.2"/><circle cx="1283.1" cy="276" r="6" fill="#67773f" stroke="#fff" stroke-width="1.2"/><circle cx="1306.2" cy="281.9" r="6" fill="#67773f" stroke="#fff" stroke-width="1.2"/><circle cx="1331.2" cy="289.6" r="6" fill="#67773f" stroke="#fff" stroke-width="1.2"/><circle cx="1403.4" cy="317" r="6" fill="#67773f" stroke="#fff" stroke-width="1.2"/><circle cx="1566.5" cy="336.2" r="6" fill="#67773f" stroke="#fff" stroke-width="1.2"/><circle cx="1182.2" cy="320.8" r="6" fill="#67773f" stroke="#fff" stroke-width="1.2"/><circle cx="1210" cy="318.9" r="6" fill="#67773f" stroke="#fff" stroke-width="1.2"/><circle cx="1238.4" cy="320.8" r="6" fill="#67773f" stroke="#fff" stroke-width="1.2"/><circle cx="1284" cy="329.5" r="6" fill="#67773f" stroke="#fff" stroke-width="1.2"/><circle cx="1313.5" cy="337.2" r="6" fill="#67773f" stroke="#fff" stroke-width="1.2"/><circle cx="1160.1" cy="337.2" r="6" fill="#67773f" stroke="#fff" stroke-width="1.2"/><circle cx="1216.7" cy="350.3" r="6" fill="#67773f" stroke="#fff" stroke-width="1.2"/><circle cx="1190.9" cy="366.4" r="6" fill="#67773f" stroke="#fff" stroke-width="1.2"/><circle cx="1285" cy="362.2" r="6" fill="#67773f" stroke="#fff" stroke-width="1.2"/><circle cx="1414" cy="367" r="6" fill="#67773f" stroke="#fff" stroke-width="1.2"/><circle cx="1138.5" cy="376.7" r="6" fill="#67773f" stroke="#fff" stroke-width="1.2"/><circle cx="1246.5" cy="396" r="6" fill="#67773f" stroke="#fff" stroke-width="1.2"/><circle cx="1484" cy="392.5" r="6" fill="#67773f" stroke="#fff" stroke-width="1.2"/><circle cx="1617.9" cy="385" r="6" fill="#67773f" stroke="#fff" stroke-width="1.2"/><circle cx="1591.9" cy="401.2" r="6" fill="#67773f" stroke="#fff" stroke-width="1.2"/><circle cx="1229.2" cy="413.4" r="6" fill="#67773f" stroke="#fff" stroke-width="1.2"/><circle cx="1208" cy="424.9" r="6" fill="#67773f" stroke="#fff" stroke-width="1.2"/><circle cx="1185.5" cy="433.2" r="6" fill="#67773f" stroke="#fff" stroke-width="1.2"/><circle cx="1162" cy="442.6" r="6" fill="#67773f" stroke="#fff" stroke-width="1.2"/><circle cx="1097.1" cy="442.6" r="6" fill="#67773f" stroke="#fff" stroke-width="1.2"/><circle cx="1127.3" cy="458.2" r="6" fill="#67773f" stroke="#fff" stroke-width="1.2"/><circle cx="1594.2" cy="433" r="6" fill="#67773f" stroke="#fff" stroke-width="1.2"/><circle cx="1553" cy="447.1" r="6" fill="#67773f" stroke="#fff" stroke-width="1.2"/><circle cx="1604" cy="456.1" r="6" fill="#67773f" stroke="#fff" stroke-width="1.2"/><circle cx="1569.8" cy="474.6" r="6" fill="#67773f" stroke="#fff" stroke-width="1.2"/><circle cx="1607.3" cy="479.4" r="6" fill="#67773f" stroke="#fff" stroke-width="1.2"/><circle cx="1663.1" cy="487.9" r="6" fill="#67773f" stroke="#fff" stroke-width="1.2"/><circle cx="1503.9" cy="486.5" r="6" fill="#67773f" stroke="#fff" stroke-width="1.2"/><circle cx="1607.7" cy="503.5" r="6" fill="#67773f" stroke="#fff" stroke-width="1.2"/><circle cx="1556.3" cy="524.6" r="6" fill="#67773f" stroke="#fff" stroke-width="1.2"/><circle cx="1608.8" cy="527.3" r="6" fill="#67773f" stroke="#fff" stroke-width="1.2"/><circle cx="1281.7" cy="522.1" r="6" fill="#67773f" stroke="#fff" stroke-width="1.2"/><circle cx="1504.5" cy="537.2" r="6" fill="#67773f" stroke="#fff" stroke-width="1.2"/><circle cx="1181.2" cy="546.2" r="6" fill="#67773f" stroke="#fff" stroke-width="1.2"/><circle cx="1601.9" cy="550.4" r="6" fill="#67773f" stroke="#fff" stroke-width="1.2"/><circle cx="1581.3" cy="561.2" r="6" fill="#67773f" stroke="#fff" stroke-width="1.2"/><circle cx="1170.3" cy="571.8" r="6" fill="#67773f" stroke="#fff" stroke-width="1.2"/><circle cx="1224.9" cy="572.6" r="6" fill="#67773f" stroke="#fff" stroke-width="1.2"/><circle cx="1512" cy="571.2" r="6" fill="#67773f" stroke="#fff" stroke-width="1.2"/><circle cx="1537.6" cy="573.7" r="6" fill="#67773f" stroke="#fff" stroke-width="1.2"/><circle cx="1532.8" cy="629.7" r="6" fill="#67773f" stroke="#fff" stroke-width="1.2"/><circle cx="1506.4" cy="674.4" r="6" fill="#67773f" stroke="#fff" stroke-width="1.2"/><circle cx="1070" cy="709.6" r="6" fill="#67773f" stroke="#fff" stroke-width="1.2"/><circle cx="1501.6" cy="767.5" r="6" fill="#67773f" stroke="#fff" stroke-width="1.2"/><ellipse cx="1359.4" cy="579.9" rx="325" ry="326.6" fill="rgba(0,178,194,0.1)" stroke="#16a6c0" stroke-width="1.1"/><rect x="1688" y="230" width="110" height="29" rx="5" fill="#fbfaf7" stroke="#e3e1db" stroke-width="0.8"/><path d="M1768.4,236 V251.5" stroke="#cfcfc8" stroke-width="1"/><path d="M1780.2,242.2 L1784.5,246.8 L1788.8,242.2" fill="none" stroke="#bdbdb6" stroke-width="1.5" stroke-linecap="round" stroke-linejoin="round"/><rect x="932" y="863" width="63" height="63" rx="6" fill="#fff"/><rect x="933.7" y="864.7" width="59.6" height="59.6" rx="4.5" fill="#36442f"/><path d="M935,865 L964,865 L962,872 L958,879 L954,886 L949,888 L944,883 L939,876 L935.5,871Z" fill="#4d69b0"/><path d="M936,870 L947,877 L955,880 L962,868 M955.5,880 V923" fill="none" stroke="#cfd6c0" stroke-width="0.6" stroke-dasharray="1.5 1.5" opacity="0.8"/><circle cx="975" cy="885" r="10" fill="#3f4e36" opacity="0.6"/><circle cx="945" cy="908" r="10" fill="#2c3a29" opacity="0.7"/><circle cx="978" cy="912" r="9" fill="#3d4c34" opacity="0.7"/><circle cx="962" cy="900" r="8" fill="#2f3d2b" opacity="0.6"/><circle cx="917.8" cy="931.6" r="7.2" fill="#fff" stroke="#8c8c8c" stroke-width="1"/><circle cx="917.8" cy="931.6" r="4.6" fill="#9a9a9a"/><path d="M914.5,934.5 L919,929 L921,931Z" fill="#fff"/><circle cx="919.3" cy="930.2" r="1.6" fill="#fff"/><text x="927.5" y="936.2" font-family="Liberation Sans, sans-serif" font-size="13.5" font-weight="700" fill="#fff" stroke="#8c8c8c" stroke-width="1.6" paint-order="stroke" stroke-linejoin="round" textLength="50" lengthAdjust="spacingAndGlyphs">mapbox</text><rect x="1782.5" y="819.5" width="27" height="28" rx="5" fill="rgba(0,0,0,0.07)"/><rect x="1784" y="821" width="24" height="25" rx="4" fill="#fbfaf8"/><circle cx="1796" cy="833.5" r="5" fill="none" stroke="#e6d8c8" stroke-width="1.2"/><path d="M1791,839 L1801,828" stroke="#e6d8c8" stroke-width="1.2" stroke-linecap="round"/><rect x="1782.5" y="851.5" width="27" height="73" rx="5" fill="rgba(0,0,0,0.07)"/><rect x="1784" y="853" width="24" height="70" rx="4" fill="#fff"/><path d="M1784,876.3 H1808 M1784,899.3 H1808" stroke="#ddd" stroke-width="1"/><path d="M1790.8,864.6 H1799.4 M1795.1,860.3 V868.9 M1790.8,887.7 H1799.4" stroke="#333" stroke-width="1.9"/><path d="M1794.6,906.2 L1797.7,912 H1791.5Z" fill="#333"/><path d="M1794.6,919.2 L1797.7,913.4 H1791.5Z" fill="#ccc"/><rect x="1599.6" y="931.5" width="220" height="17" fill="rgba(255,255,255,0.5)"/></svg><span class="t" style="left:1696.40px;top:237.00px;font-size:13.5px;font-weight:700;color:#9b9e93;letter-spacing:-0.405px;">Draw</span><span class="t" style="left:936.70px;top:890.00px;font-size:12.5px;font-weight:700;color:#fff;letter-spacing:0.333px;">Satellite</span><span class="t" style="left:1603.10px;top:935.00px;font-size:10px;font-weight:400;color:#3a3a3a;letter-spacing:-0.224px;">© Mapbox © OpenStreetMap</span><span class="t" style="left:1731.10px;top:935.00px;font-size:10px;font-weight:700;color:#3a3a3a;letter-spacing:-0.181px;">Improve this map</span>
<div class="abs" style="left:1815px;top:0;width:3px;height:956px;background:#e4e7ec"></div>
<div class="abs" style="left:1815px;top:0;width:3px;height:103.5px;background:#b5b8bd;border-radius:2px 0 0 2px"></div>
</body></html>
